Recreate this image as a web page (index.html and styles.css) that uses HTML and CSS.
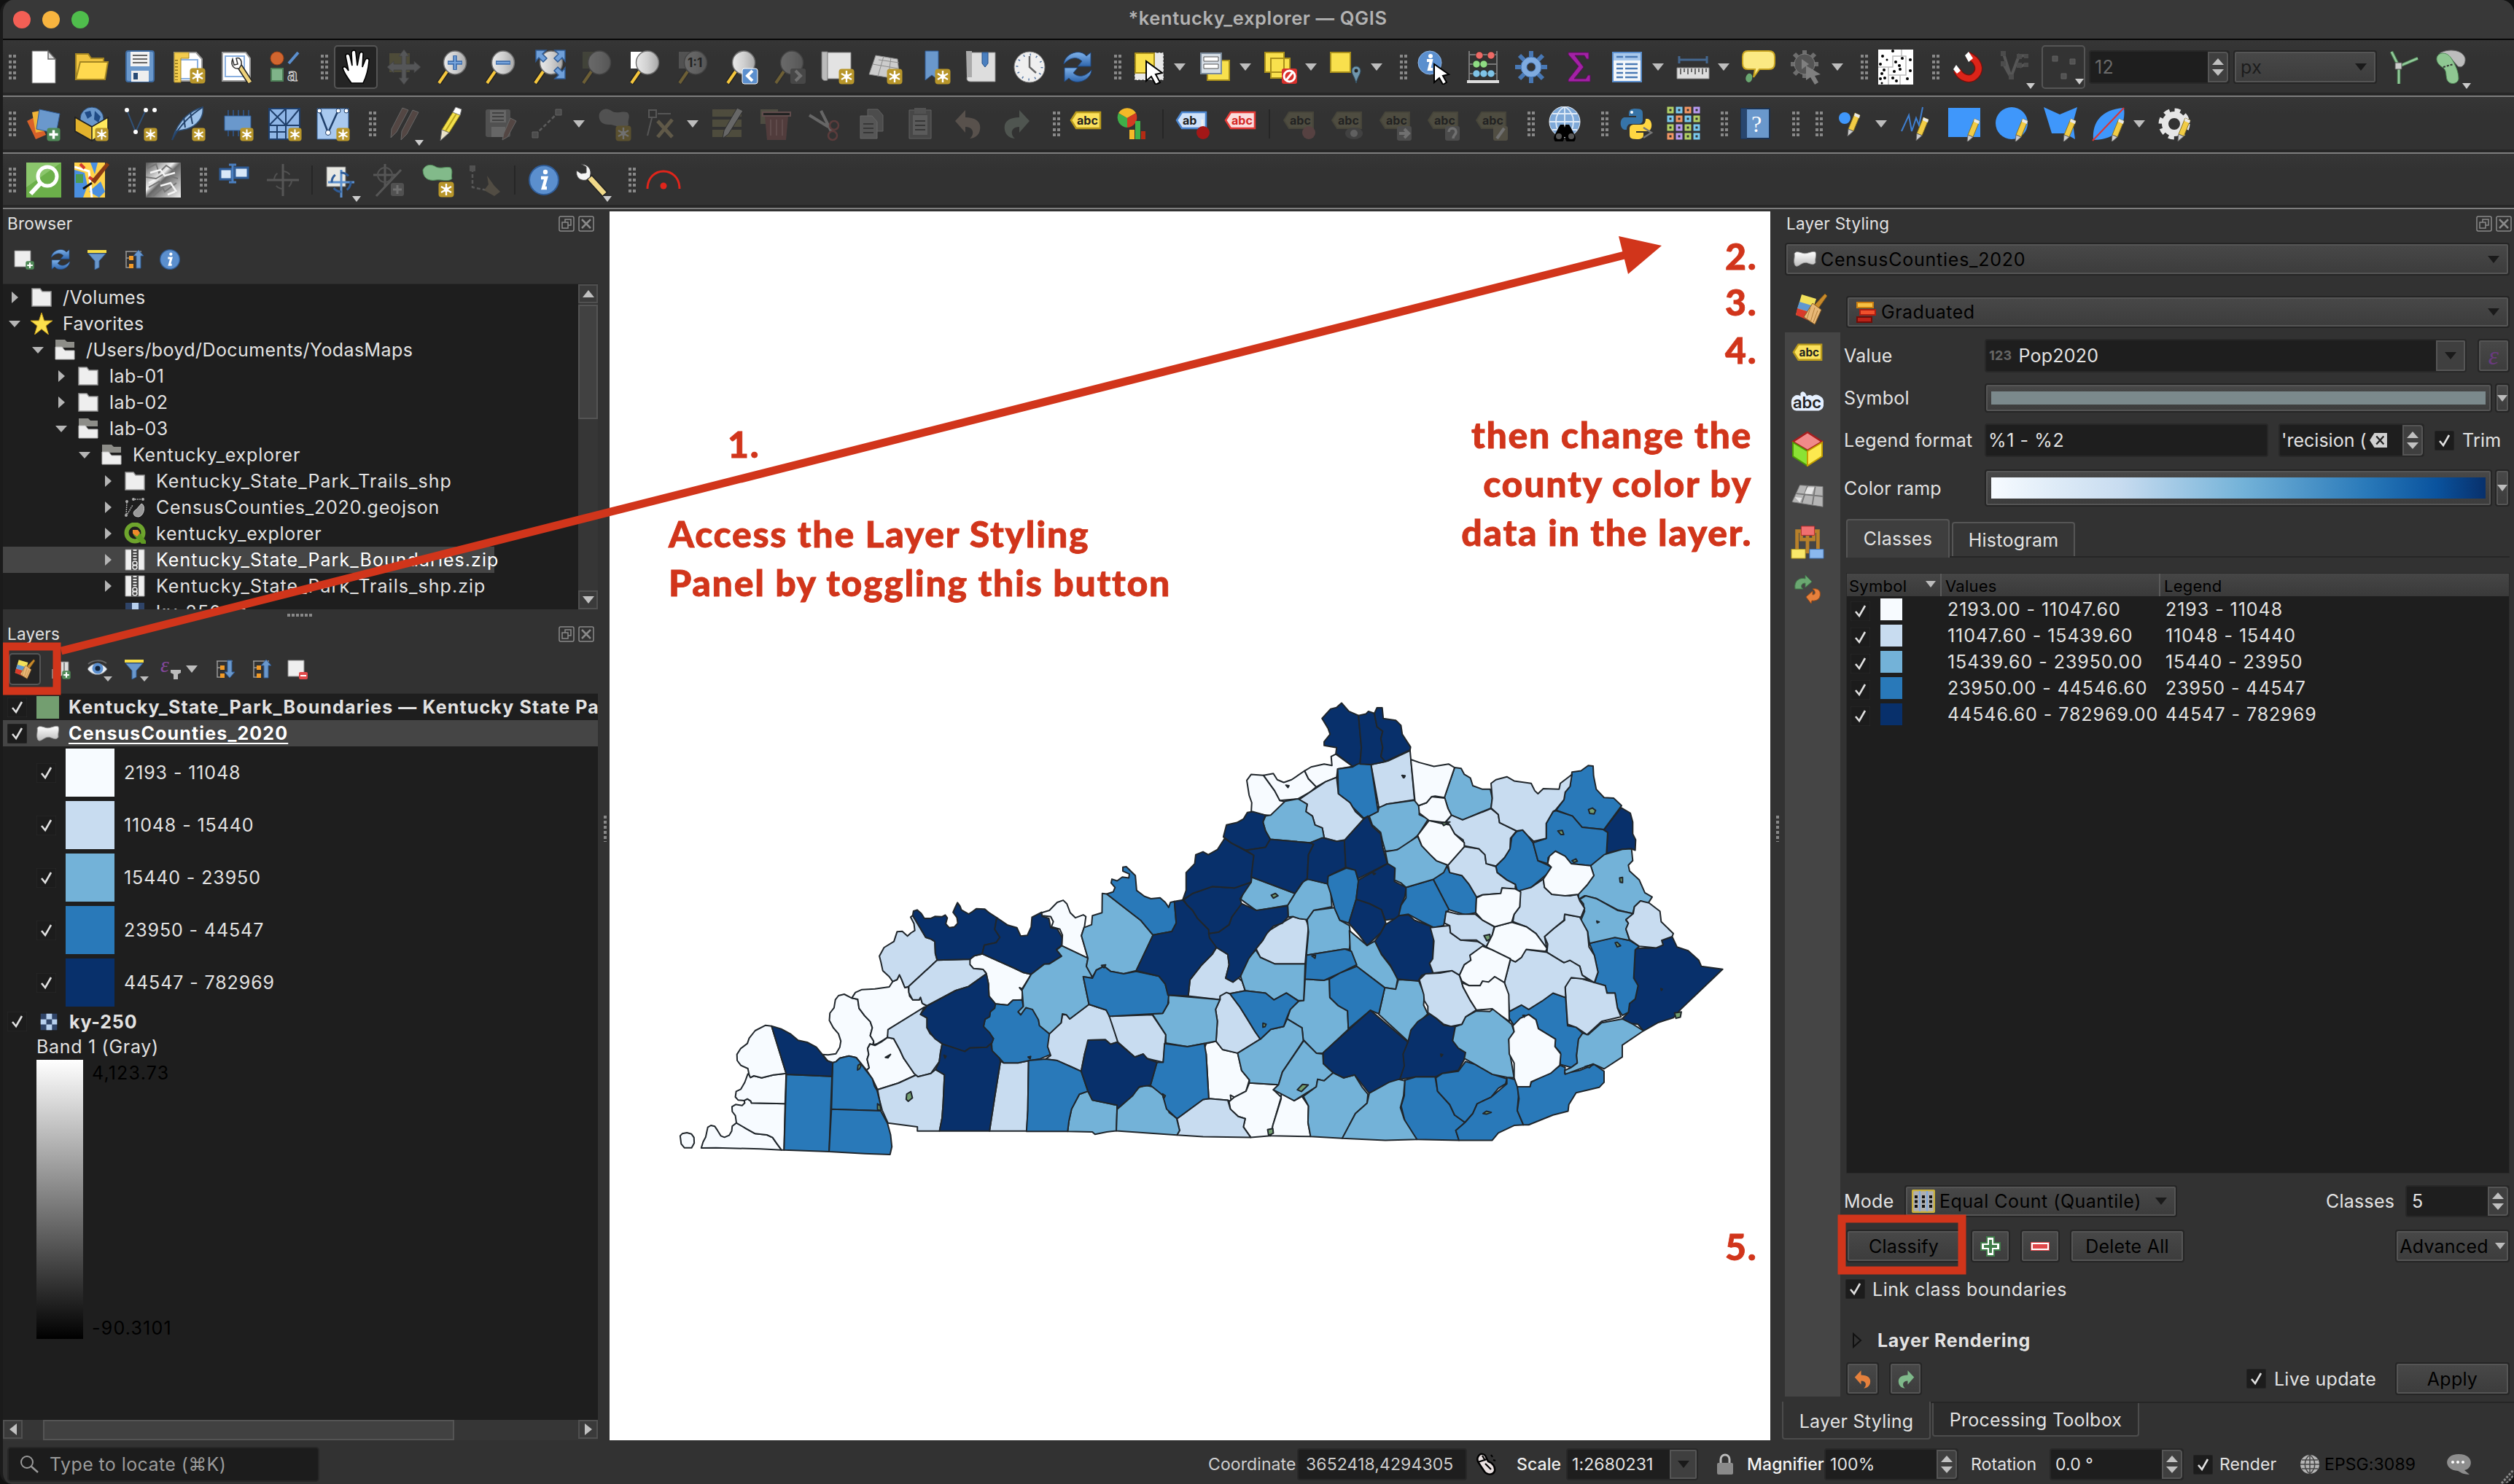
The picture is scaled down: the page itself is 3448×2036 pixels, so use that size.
FILE: index.html
```html
<!DOCTYPE html>
<html lang="en">
<head>
<meta charset="utf-8">
<title>*kentucky_explorer — QGIS</title>
<link rel="stylesheet" href="styles.css">
</head>
<body>
<svg class="defs" width="0" height="0">
<defs>
<linearGradient id="lens" x1="0" x2="1"><stop offset="0" stop-color="#e9e9e9"/><stop offset=".5" stop-color="#d0d0d0"/><stop offset="1" stop-color="#a8a8a8"/></linearGradient>
<linearGradient id="hill" x1="0" y1="0" x2="1" y2="1"><stop offset="0" stop-color="#555"/><stop offset=".4" stop-color="#eee"/><stop offset=".5" stop-color="#666"/><stop offset="1" stop-color="#f4f4f4"/></linearGradient>
<linearGradient id="bluefill" x1="0" y1="0" x2="0" y2="1"><stop offset="0" stop-color="#7fb2ea"/><stop offset="1" stop-color="#2f66ad"/></linearGradient>
<linearGradient id="blob" x1="0" y1="0" x2="0" y2="1"><stop offset="0" stop-color="#ffffff"/><stop offset="1" stop-color="#bdbdbd"/></linearGradient>

<symbol id="gold" viewBox="0 0 22 22"><rect x=".5" y=".5" width="21" height="21" rx="4" fill="#b8962a"/><path d="M11 3v16M4 7l14 8M4 15l14-8" stroke="#fff" stroke-width="2.4"/><circle cx="11" cy="11" r="3.2" fill="#fff"/></symbol>
<symbol id="plusb" viewBox="0 0 22 22"><rect x=".5" y=".5" width="21" height="21" rx="4" fill="#4f8a57"/><path d="M11 4v14M4 11h14" stroke="#fff" stroke-width="4"/></symbol>
<symbol id="pencil" viewBox="0 0 20 34"><path d="M12 2l7 3-9 22-7-3z" fill="#f2cc45" stroke="#8a7420"/><path d="M3 24l7 3-8 7z" fill="#ccc" stroke="#666"/><path d="M12 2l7 3-1 4-7-3z" fill="#e8e8e8"/></symbol>
<symbol id="mag" viewBox="0 0 48 48"><path d="M17 30L6 46" stroke="#222" stroke-width="7"/><path d="M17 30L6 46" stroke="#f5c63c" stroke-width="4"/><ellipse cx="28" cy="18" rx="15.500" ry="16" fill="url(#lens)" stroke="#707070" stroke-width="1.500"/></symbol>
<symbol id="info" viewBox="0 0 48 48"><circle cx="24" cy="24" r="20" fill="#5b8fce" stroke="#2f5c97" stroke-width="2"/><circle cx="26" cy="13" r="3.200" fill="#fff"/><path d="M20 21h7l-4 14h5" fill="none" stroke="#fff" stroke-width="4.500"/></symbol>
<symbol id="refresh" viewBox="0 0 48 48"><path d="M5 20C6 5 28-2 36 9l6-5v19H24l6-7C22 8 12 12 5 20z" fill="url(#bluefill)" stroke="#1f4b86"/><path d="M43 28C42 43 20 50 12 39l-6 5V25h18l-6 7c8 8 18 4 25-4z" fill="url(#bluefill)" stroke="#1f4b86"/></symbol>
<symbol id="tag" viewBox="0 0 48 48"><path d="M4 19L11 8h33v22H11z" fill="currentColor" stroke="#b99a1c" stroke-width="2.500"/></symbol>

<symbol id="new" viewBox="0 0 48 48"><path d="M8 2h22l10 11v33H8z" fill="#fff" stroke="#777"/><path d="M30 2v11h10z" fill="#ddd" stroke="#666" stroke-width="1.500"/></symbol>
<symbol id="open" viewBox="0 0 48 48"><path d="M2 41V6h17l4 6h17v8" fill="#f0c440" stroke="#a38522" stroke-width="2"/><path d="M8 17h38l-4 24H2z" fill="#ffd94f" stroke="#a38522" stroke-width="2"/></symbol>
<symbol id="save" viewBox="0 0 48 48"><rect x="5" y="2" width="38" height="42" rx="3" fill="#6a98cc" stroke="#3e6ca3" stroke-width="2"/><path d="M11 3h26v20H11z" fill="#f2f2f2"/><path d="M14 8h20M14 13h20M14 18h20" stroke="#666" stroke-width="2"/><path d="M12 29h24v15H12z" fill="#eee"/><path d="M15 32h6v9h-6z" fill="#284b76"/></symbol>
<symbol id="layout" viewBox="0 0 48 48"><path d="M5 4h30l8 9v30H5z" fill="#fff" stroke="#999" stroke-width="2"/><path d="M11 14h26v26H11z" fill="none" stroke="#8ab0e0" stroke-width="2"/><path d="M5 4h20v8H14v33H5z" fill="#f3cc4e" stroke="#a38522"/><path d="M8 14v28" stroke="#8c7018" stroke-width="4" stroke-dasharray="1.500 3"/><use href="#gold" x="26" y="25" width="22" height="22"/></symbol>
<symbol id="wrenchdoc" viewBox="0 0 48 48"><path d="M5 4h32l6 8v31H5z" fill="#fff" stroke="#999" stroke-width="2"/><path d="M9 9h26v28H9z" fill="none" stroke="#8ab0e0" stroke-width="2"/><path d="M28 22l15 23" stroke="#222" stroke-width="8"/><path d="M28 22l15 23" stroke="#efd27a" stroke-width="5"/><path d="M19 13c-3 8 1 14 9 13l3-5c1-6-2-11-7-9l2 8-5 1z" fill="#fff" stroke="#333" stroke-width="1.500"/></symbol>
<symbol id="style" viewBox="0 0 48 48"><circle cx="14" cy="12" r="9" fill="#d0652f" stroke="#a34314"/><path d="M30 19L43 4" stroke="#5b8fce" stroke-width="4"/><path d="M6 26h16v17H6z" fill="#7fb489" stroke="#4e8058" stroke-width="2"/><text x="28" y="43" font-size="28" font-weight="700" font-family="Liberation Serif,serif" fill="#555" stroke="#ddd">a</text></symbol>
<symbol id="hand" viewBox="0 0 48 48"><path d="M18 46C12 38 7 31 6 25c2-3 5-1 8 4L10 9c0-4 5-4 6 0l3 13L18 4c1-4 6-4 6 0l2 18 3-16c1-4 6-3 5 1l-1 17 4-10c2-3 6-2 5 2-1 12-3 20-8 30z" fill="#fff" stroke="#000" stroke-width="1.600"/></symbol>
<symbol id="pansel" viewBox="0 0 48 48"><path d="M4 5h28v26H4z" fill="#8d8548"/><path d="M24 0l7 9h-4v11h11v-4l9 8-9 8v-4H27v11h4l-7 9-7-9h4V28H10v4l-9-8 9-8v4h11V9h-4z" fill="#a5aab0" stroke="#666"/></symbol>
<symbol id="zin" viewBox="0 0 48 48"><use href="#mag"/><path d="M28 8v20M18 18h20" stroke="#3f6fae" stroke-width="5.500"/><path d="M28 9v18M19 18h18" stroke="#78a5dc" stroke-width="2"/></symbol>
<symbol id="zout" viewBox="0 0 48 48"><use href="#mag"/><path d="M18 18h20" stroke="#3f6fae" stroke-width="5.500"/><path d="M19 18h18" stroke="#78a5dc" stroke-width="2"/></symbol>
<symbol id="zfull" viewBox="0 0 48 48"><use href="#mag"/><path d="M7 1h14l-5 5 6 6-5 5-6-6-4 5zM47 1H33l5 5-6 6 5 5 6-6 4 5zM47 40H33l5-5-6-6 5-5 6 6 4-5z" fill="#6fa0da" stroke="#2f5c97" stroke-width="1.500"/></symbol>
<symbol id="zsel" viewBox="0 0 48 48"><path d="M5 3h20v23H5z" fill="#666a4a"/><use href="#mag"/></symbol>
<symbol id="zlay" viewBox="0 0 48 48"><path d="M5 3h20v23H5z" fill="#fff"/><use href="#mag"/></symbol>
<symbol id="znat" viewBox="0 0 48 48"><path d="M5 3h20v23H5z" fill="#999"/><use href="#mag"/><text x="17" y="24" font-size="17" font-weight="700" font-family="Inter,sans-serif">1:1</text></symbol>
<symbol id="zlast" viewBox="0 0 48 48"><use href="#mag"/><rect x="26" y="26" width="21" height="21" rx="3" fill="#5b8fce" stroke="#fff"/><path d="M40 29l-7 7 7 7" fill="none" stroke="#fff" stroke-width="4"/></symbol>
<symbol id="znext" viewBox="0 0 48 48"><use href="#mag"/><rect x="26" y="26" width="21" height="21" rx="3" fill="#777"/><path d="M33 29l7 7-7 7" fill="none" stroke="#fff" stroke-width="4"/></symbol>
<symbol id="newmap" viewBox="0 0 48 48"><path d="M5 4h38v36H5z" fill="#e3e3e3" stroke="#888"/><path d="M3 3h8v39c-5 2-8-1-8-4z" fill="#bbb" stroke="#777"/><use href="#gold" x="26" y="26" width="22" height="22"/></symbol>
<symbol id="new3d" viewBox="0 0 48 48"><path d="M11 8l30 5 3 28-42-7z" fill="#ccc" stroke="#888"/><path d="M22 9l-8 28M32 11l-4 28M7 20l35 6M15 14l28 4" stroke="#8b8b8b" fill="none"/><use href="#gold" x="26" y="26" width="22" height="22"/></symbol>
<symbol id="newbook" viewBox="0 0 48 48"><path d="M13 2h18v40l-9-7-9 7z" fill="#6a98cc" stroke="#2f5c97"/><use href="#gold" x="26" y="26" width="22" height="22"/></symbol>
<symbol id="bookm" viewBox="0 0 48 48"><path d="M5 4h38v40H9c-5 0-6-4-4-8z" fill="#ddd" stroke="#888"/><path d="M3 2h8v36H4z" fill="#aaa"/><path d="M25 4h8v15l-4 5-4-5z" fill="#4a7fbf" stroke="#24518a"/></symbol>
<symbol id="clock" viewBox="0 0 48 48"><circle cx="24" cy="24" r="21" fill="#efefef" stroke="#888"/><circle cx="24" cy="24" r="17" fill="none" stroke="#5577a5" stroke-width="3" stroke-dasharray="1.500 7.400"/><path d="M24 9v15l9 8" fill="none" stroke="#666" stroke-width="2.500"/></symbol>
<symbol id="sel1" viewBox="0 0 48 48"><path d="M4 4h40v38H4z" fill="#e8e8e8" stroke="#222" stroke-dasharray="3 2"/><path d="M5 5h26v27H5z" fill="#f9e04d" stroke="#a98f1b" stroke-width="2"/><path d="M20 16v27l7-6 6 11 6-3-6-11 9-2z" fill="#fff" stroke="#000" stroke-width="2"/></symbol>
<symbol id="sel2" viewBox="0 0 48 48"><path d="M14 15h30v27H14z" fill="#f9e04d" stroke="#a98f1b" stroke-width="2"/><path d="M5 5h28v28H5z" fill="#d5dde5" stroke="#7b8b9c" stroke-width="2"/><path d="M9 10h20v6H9zM9 20h20v6H9z" fill="#fff" stroke="#555"/></symbol>
<symbol id="sel3" viewBox="0 0 48 48"><path d="M3 4h26v27H3zM11 12h26v27H11z" fill="#f9e04d" stroke="#a98f1b" stroke-width="2"/><rect x="26" y="26" width="21" height="21" rx="3" fill="#d9302c"/><circle cx="36.500" cy="36.500" r="7.500" fill="none" stroke="#fff" stroke-width="3"/><path d="M32 42l9-11" stroke="#fff" stroke-width="3"/></symbol>
<symbol id="sel4" viewBox="0 0 48 48"><path d="M3 4h27v27H3z" fill="#f9e04d" stroke="#a98f1b" stroke-width="2"/><path d="M38 46c-2-9-6-12-6-17a6 6 0 0112 0c0 5-4 8-6 17z" fill="#6f95ab" stroke="#35566b"/><circle cx="38" cy="29" r="2.500" fill="#222"/></symbol>
<symbol id="ident" viewBox="0 0 48 48"><circle cx="17" cy="18" r="16" fill="#5b8fce" stroke="#8fb6e6"/><circle cx="18" cy="9" r="3" fill="#fff"/><path d="M13 15h6l-3 12h5" fill="none" stroke="#fff" stroke-width="4"/><path d="M23 20v25l7-6 5 9 5-3-5-9 8-2z" fill="#fff" stroke="#000" stroke-width="2"/></symbol>
<symbol id="abacus" viewBox="0 0 48 48"><path d="M5 2v42M43 2v42M5 7h38M5 20h38M5 33h38" stroke="#777" stroke-width="2" fill="none"/><path d="M2 42h44v4H2z" fill="#ddd"/><g stroke="#0006"><circle cx="19" cy="8" r="5" fill="#ee6a66"/><circle cx="35" cy="8" r="5" fill="#ee6a66"/><circle cx="15" cy="20" r="5" fill="#8fdc84"/><circle cx="25" cy="20" r="5" fill="#8fdc84"/><circle cx="15" cy="33" r="5" fill="#7fc3e6"/><circle cx="25" cy="33" r="5" fill="#7fc3e6"/><circle cx="35" cy="33" r="5" fill="#7fc3e6"/></g></symbol>
<symbol id="gear" viewBox="0 0 48 48"><path d="M24 2v44M2 24h44M8 8l32 32M40 8L8 40" stroke="#4878b5" stroke-width="6"/><circle cx="24" cy="24" r="14" fill="#7fabe0" stroke="#3f6fae"/><circle cx="24" cy="24" r="6" fill="#333" stroke="#3f6fae"/></symbol>
<symbol id="sigma" viewBox="0 0 48 48"><path d="M9 4h28v9h-3l-3-5H18l12 16-13 16h16l3-5h3v9H9v-3l14-18L9 7z" fill="#a321a5" stroke="#5c0f5e"/></symbol>
<symbol id="table" viewBox="0 0 48 48"><path d="M4 4h39v40H4z" fill="#f4f7fa" stroke="#5b8fce" stroke-width="2"/><path d="M5 5h37v10H5z" fill="#a8c8ec"/><path d="M9 10h9M21 10h17M9 20h9M21 20h17M9 26h9M21 26h17M9 32h9M21 32h17M9 38h9M21 38h17" stroke="#4a7ab5" stroke-width="2.500"/></symbol>
<symbol id="measure" viewBox="0 0 48 48"><path d="M5 14h38M5 9v10M43 9v10" stroke="#44678f" stroke-width="3"/><path d="M2 25h44v15H2z" fill="#ddd" stroke="#888"/><path d="M7 26v8M12 26v5M17 26v8M22 26v5M27 26v8M32 26v5M37 26v8M42 26v5" stroke="#444" stroke-width="1.500"/></symbol>
<symbol id="tip" viewBox="0 0 48 48"><path d="M10 33c8-2 6 13 0 12-6-2-4-10 0-12z" fill="#6aa771"/><path d="M9 2h29q8 0 8 8v9q0 8-8 8H25L17 38l2-11H9q-7 0-7-8v-9q0-8 7-8z" fill="#fbe983" stroke="#c9a520" stroke-width="2"/></symbol>
<symbol id="action" viewBox="0 0 48 48"><path d="M21 1v38M2 20h38M7 6l28 28M35 6L7 34" stroke="#aaa" stroke-width="6"/><circle cx="21" cy="20" r="14" fill="#777" stroke="#ccc"/><path d="M17 13l10 7-10 7z" fill="#ccc"/><path d="M23 22v20l6-4 6 10 5-3-5-9 8-2z" fill="#ccc"/></symbol>
<symbol id="dots" viewBox="0 0 48 48"><path d="M0 0h48v48H0z" fill="#fff"/><path d="M0 24h20V9h18v26H14v13M32 0v9M14 24v11M30 35v13" fill="none" stroke="#bbb" stroke-width="1.500"/><g fill="#000"><circle cx="6" cy="9" r="2"/><circle cx="20" cy="2" r="2"/><circle cx="12" cy="14" r="1.500"/><circle cx="3" cy="20" r="2"/><circle cx="24" cy="17" r="2"/><circle cx="33" cy="12" r="2"/><circle cx="44" cy="14" r="2"/><circle cx="29" cy="22" r="2"/><circle cx="8" cy="28" r="2"/><circle cx="5" cy="33" r="2"/><circle cx="22" cy="30" r="2"/><circle cx="30" cy="27" r="2"/><circle cx="44" cy="29" r="2"/><circle cx="3" cy="40" r="2"/><circle cx="9" cy="39" r="2"/><circle cx="20" cy="39" r="2"/><circle cx="25" cy="43" r="2"/><circle cx="40" cy="40" r="2"/><circle cx="5" cy="46" r="1.500"/></g></symbol>
<symbol id="magnet" viewBox="0 0 48 48"><path d="M25 8C40 15 43 27 36 35 28 44 15 39 10 28" fill="none" stroke="#7a0e0a" stroke-width="11"/><path d="M25 8C40 15 43 27 36 35 28 44 15 39 10 28" fill="none" stroke="#dc2419" stroke-width="8.500"/><path d="M26 3l6 9-6 5-5-9zM9 21l6 8-5 4-5-6z" fill="#fff"/></symbol>
<symbol id="vtx" viewBox="0 0 48 48"><path d="M8 6l10 32M30 6L18 38M8 20l10 18M36 8l-8 2M38 20l-8 4" stroke="#aaa" stroke-width="4" fill="none"/><path d="M4 2h7v7H4zM26 6h7v7h-7zM36 6h6v6h-6zM4 16h7v7H4zM26 18h7v7h-7zM36 18h6v6h-6zM15 34h7v7h-7z" fill="#888"/></symbol>
<symbol id="vdots" viewBox="0 0 48 48"><path d="M9 9h7v7H9zM33 13h7v7h-7zM21 33h7v7h-7z" fill="#999" stroke="#ccc"/></symbol>
<symbol id="topo" viewBox="0 0 48 48"><path d="M8 3l10 20L44 12M18 23v24" stroke="#4f8a57" stroke-width="4.500" fill="none"/><path d="M8 3l10 20L44 12M18 23v24" stroke="#93c99b" stroke-width="2.500" fill="none"/><path d="M13 18h9v9h-9z" fill="#ccc" stroke="#555"/></symbol>
<symbol id="foot" viewBox="0 0 48 48"><path d="M8 5C20-2 40 0 43 12c1 9-5 14-10 11L22 10z" fill="#bdbdbd" stroke="#666"/><path d="M4 14C3 4 17 1 24 12c5 8 10 18 10 28-1 8-13 9-16 1-2-8 0-11-5-16-5-3-8-6-9-11z" fill="#8fc792" stroke="#4f8a57"/><path d="M13 24l14-4" stroke="#333" stroke-dasharray="3 2" stroke-width="2"/></symbol>

<symbol id="dsm" viewBox="0 0 48 48"><path d="M1 20l14-7 12 26-14 6z" fill="#d8622a"/><path d="M8 8l16-3 4 28-15 3z" fill="#f0b437"/><path d="M18 4l28 6-5 27-27-6z" fill="#6a98cc" stroke="#2f5c97"/><use href="#plusb" x="28" y="29" width="19" height="19"/></symbol>
<symbol id="geopkg" viewBox="0 0 48 48"><circle cx="24" cy="17" r="16" fill="#6a98cc" stroke="#284b76"/><path d="M14 8l8-2 2 7-6 4zM28 6l8 8-3 8-6-4z" fill="#1f4b86"/><path d="M1 15l23 13 22-13v17L24 47 1 34z" fill="#ffe95c" stroke="#222" stroke-width="1.500"/><path d="M1 15l23 13v19L1 34z" fill="#e2b22c" stroke="#222" stroke-width="1.500"/><use href="#gold" x="28" y="29" width="19" height="19"/></symbol>
<symbol id="shp" viewBox="0 0 48 48"><path d="M6 5l12 30L32 5" fill="none" stroke="#2f5077" stroke-width="2"/><circle cx="6" cy="5" r="3" fill="#fff"/><circle cx="32" cy="5" r="3" fill="#fff"/><circle cx="44" cy="5" r="3" fill="#fff"/><circle cx="18" cy="35" r="3" fill="#fff"/><use href="#gold" x="29" y="29" width="19" height="19"/></symbol>
<symbol id="feather" viewBox="0 0 48 48"><path d="M2 46C8 26 20 8 44 1c2 14-8 26-22 30L8 34z" fill="#9fc3ea" stroke="#2f5077" stroke-width="1.500"/><path d="M2 46C10 30 24 14 44 1M18 15l2 14M27 8l3 16" fill="none" stroke="#24436b" stroke-width="2"/><use href="#gold" x="29" y="29" width="19" height="19"/></symbol>
<symbol id="chip" viewBox="0 0 48 48"><path d="M13 5v36M20 5v36M27 5v36M34 5v36M41 5v28" stroke="#2f4f7a" stroke-width="2"/><path d="M8 13h36v20H8z" fill="#6a98cc" stroke="#2f5c97"/><use href="#gold" x="29" y="29" width="19" height="19"/></symbol>
<symbol id="mesh" viewBox="0 0 48 48"><path d="M3 3h42v42H3z" fill="#8fb6e6" stroke="#1f3f6b" stroke-width="2"/><path d="M3 26h42M26 3v42M3 3l23 23L45 3M3 26L26 3M14 26v19M3 35h23" stroke="#1f3f6b" stroke-width="2" fill="none"/><use href="#gold" x="29" y="29" width="19" height="19"/></symbol>
<symbol id="virt" viewBox="0 0 48 48"><path d="M3 3h43v42H3z" fill="#a9c9ef" stroke="#2f5c97"/><path d="M6 5l12 31L32 5" fill="none" stroke="#1f3f6b" stroke-width="2.500"/><g fill="#fff" stroke="#1f3f6b"><circle cx="6" cy="6" r="3"/><circle cx="32" cy="6" r="3"/><circle cx="43" cy="6" r="3"/><circle cx="18" cy="36" r="3.500"/></g><use href="#gold" x="29" y="29" width="19" height="19"/></symbol>
<symbol id="pens" viewBox="0 0 48 48"><path d="M22 2l8 3-16 30-8 8 1-12zM36 5l8 3-16 30-8 8 1-12z" fill="#a0766a" stroke="#ddd"/></symbol>
<symbol id="pen" viewBox="0 0 48 48"><path d="M25 8l10 4-15 24-10-4z" fill="#f3e04c" stroke="#8a7b16"/><path d="M25 8l4-7 8 3-2 8z" fill="#fff" stroke="#888"/><path d="M10 32l10 4-12 11z" fill="#e9e2c9" stroke="#777"/><path d="M30 10L15 34" stroke="#b7a31f" stroke-width="2"/></symbol>
<symbol id="savee" viewBox="0 0 48 48"><rect x="4" y="4" width="34" height="38" rx="3" fill="#999"/><path d="M10 5h22v17H10zM12 28h19v14H12z" fill="#ddd"/><path d="M13 9h16M13 14h16M13 19h16" stroke="#666" stroke-width="2"/><path d="M38 16l8 4-12 22-7 4 2-9z" fill="#a0766a" stroke="#ddd"/></symbol>
<symbol id="digi" viewBox="0 0 48 48"><path d="M6 39L38 8" stroke="#bbb" stroke-width="2.500" stroke-dasharray="5 3"/><path d="M2 35h8v8H2zM34 4h8v8h-8z" fill="#888" stroke="#ccc"/></symbol>
<symbol id="poly" viewBox="0 0 48 48"><path d="M4 10C8 2 16 2 22 7c6 3 14-1 20 1 6 5 0 10 2 17-4 7-16 2-24 0-12 1-18-5-16-15z" fill="#9a9a9a"/><use href="#gold" x="26" y="26" width="22" height="22"/></symbol>
<symbol id="tools" viewBox="0 0 48 48"><path d="M6 5h10v10H6zM18 10h18M10 16L4 40" stroke="#aaa" stroke-width="2" fill="none"/><path d="M18 42l20-24M38 42L18 20" stroke="#c9b57c" stroke-width="5"/></symbol>
<symbol id="mod" viewBox="0 0 48 48"><path d="M3 4h40v10H3zM3 18h40v10H3zM3 32h40v10H3z" fill="#8f8858"/><path d="M37 2l8 4-20 32-8 6 2-11z" fill="#e0e0e0" stroke="#222"/></symbol>
<symbol id="trash" viewBox="0 0 48 48"><path d="M3 4h24v20H3z" fill="#8f8a66"/><path d="M9 13h32l-3 33H12z" fill="#985454"/><path d="M6 8h38v5H6zM17 18v22M25 18v22M33 18v22" stroke="#c88" stroke-width="2"/></symbol>
<symbol id="cut" viewBox="0 0 48 48"><path d="M4 12l26 16M20 6l14 28" stroke="#ddd" stroke-width="4"/><circle cx="38" cy="26" r="6" fill="none" stroke="#b55" stroke-width="2.500"/><circle cx="36" cy="40" r="6" fill="none" stroke="#b55" stroke-width="2.500"/></symbol>
<symbol id="copy" viewBox="0 0 48 48"><path d="M18 4h14l7 8v22H18z" fill="#888" stroke="#ccc"/><path d="M8 13h16l7 8v23H8z" fill="#aaa" stroke="#ddd"/><path d="M12 24h14M12 30h14M12 36h14" stroke="#444" stroke-width="2"/></symbol>
<symbol id="paste" viewBox="0 0 48 48"><path d="M9 5h30v39H9z" fill="#777" stroke="#ccc"/><path d="M14 12h20v27H14z" fill="#bbb"/><path d="M16 2h16v8H16z" fill="#999"/><path d="M17 20h14M17 26h14M17 32h14" stroke="#444" stroke-width="2"/></symbol>
<symbol id="undo" viewBox="0 0 48 48"><path d="M6 20L20 5v10c14 0 22 6 20 17-1 8-8 12-14 12 6-4 7-16-6-16v8z" fill="currentColor"/></symbol>
<symbol id="redo" viewBox="0 0 48 48"><path d="M42 20L28 5v10C14 15 6 21 8 32c1 8 8 12 14 12-6-4-7-16 6-16v8z" fill="currentColor"/></symbol>
<symbol id="abc" viewBox="0 0 48 48"><use href="#tag"/><text x="12" y="25" font-size="16" font-weight="700" font-family="Inter,sans-serif" fill="#222">abc</text></symbol>
<symbol id="diag" viewBox="0 0 48 48"><path d="M15 16V29A14 14 0 013 9z" fill="#3fae49"/><path d="M3 9a14 14 0 0124 0L15 16z" fill="#f4b928"/><path d="M15 16l12-7a14 14 0 01-12 20z" fill="#d23a22"/><path d="M18 32h7v13h-7z" fill="#f4b928"/><path d="M26 20h7v25h-7z" fill="#3fae49"/><path d="M34 34h6v11h-6z" fill="#b32b14"/></symbol>
<symbol id="pinlab" viewBox="0 0 48 48"><path d="M3 19L10 8h33v22H10z" fill="#cfe2fa" stroke="#4a85cf" stroke-width="2.500"/><text x="11" y="25" font-size="16" font-weight="700" font-family="Inter,sans-serif" fill="#222">ab</text><path d="M38 18v12" stroke="#eee" stroke-width="3"/><ellipse cx="39" cy="36" rx="9" ry="9" fill="#a31717"/></symbol>
<symbol id="redlab" viewBox="0 0 48 48"><path d="M4 19L11 8h33v22H11z" fill="#fbdcdc" stroke="#e53935" stroke-width="2.500"/><text x="12" y="25" font-size="16" font-weight="700" font-family="Inter,sans-serif" fill="#d42a26">abc</text></symbol>
<symbol id="lb" viewBox="0 0 48 48"><path d="M4 19L11 8h33v22H11z" fill="#8f8a62" stroke="#77734f" stroke-width="2"/><text x="12" y="25" font-size="16" font-weight="700" font-family="Inter,sans-serif" fill="#000">abc</text></symbol>
<symbol id="lb1" viewBox="0 0 48 48"><use href="#lb"/><circle cx="38" cy="36" r="9" fill="#a66"/></symbol>
<symbol id="lb2" viewBox="0 0 48 48"><use href="#lb"/><ellipse cx="34" cy="37" rx="12" ry="8" fill="#666"/><circle cx="34" cy="37" r="5" fill="#ccc"/></symbol>
<symbol id="lb3" viewBox="0 0 48 48"><use href="#lb"/><rect x="27" y="27" width="20" height="20" rx="3" fill="#888"/><path d="M30 37h12M37 31l6 6-6 6" stroke="#fff" stroke-width="4" fill="none"/></symbol>
<symbol id="lb4" viewBox="0 0 48 48"><use href="#lb"/><rect x="27" y="27" width="20" height="20" rx="3" fill="#888"/><path d="M32 35a5 5 0 1110 0c0 4-4 4-4 9" stroke="#fff" stroke-width="3.500" fill="none"/></symbol>
<symbol id="lb5" viewBox="0 0 48 48"><use href="#lb"/><rect x="27" y="27" width="20" height="20" rx="3" fill="#9a916c"/><path d="M32 44l10-14" stroke="#fff" stroke-width="4"/></symbol>
<symbol id="globe" viewBox="0 0 48 48"><circle cx="24" cy="21" r="21" fill="#7fa9d8" stroke="#e8f0fa"/><path d="M24 0v42M3 21h42M7 10h34M7 32h34M24 0C8 10 8 32 24 42 40 32 40 10 24 0" fill="none" stroke="#dfeaf7" stroke-width="1.800"/><path d="M15 30l3-5h5l1 4 1-4h5l3 5 5 10a7 7 0 11-13 2h-2a7 7 0 11-13-2z" fill="#000"/><circle cx="16" cy="41" r="4" fill="#555"/><circle cx="33" cy="41" r="4" fill="#555"/></symbol>
<symbol id="python" viewBox="0 0 48 48"><path d="M23 3c10 0 10 3 10 8v7c0 4-2 6-6 6H17c-4 0-6 3-6 8H8c-7-2-7-16 0-17h16v-2H14V9c0-4 3-6 9-6z" fill="#3674a8"/><path d="M25 45c-10 0-10-3-10-8v-6c0-4 2-6 6-6h10c4 0 6-3 6-8h3c7 2 7 16 0 17H24v2h10v3c0 4-3 6-9 6z" fill="#ffd642"/><circle cx="18" cy="8" r="2" fill="#fff"/><path d="M34 29l11 7-11 7" fill="none" stroke="#777" stroke-width="2.500"/></symbol>
<symbol id="grid" viewBox="0 0 48 48"><g fill="none" stroke-width="3"><path d="M2 2h6v6H2zM26 26h6v6h-6zM2 26h6v6H2zM38 14h6v6h-6zM26 38h6v6h-6z" stroke="#b2d066"/><path d="M14 2h6v6h-6zM2 14h6v6H2zM26 14h6v6h-6zM38 26h6v6h-6zM38 38h6v6h-6z" stroke="#79c8ee"/><path d="M26 2h6v6h-6zM14 14h6v6h-6zM2 38h6v6H2z" stroke="#f29664"/><path d="M38 2h6v6h-6zM14 26h6v6h-6zM14 38h6v6h-6z" stroke="#b79af0"/></g></symbol>
<symbol id="help" viewBox="0 0 48 48"><path d="M4 3h39v41H4z" fill="#6a98cc" stroke="#1c3352" stroke-width="2"/><path d="M4 3h8v41H4z" fill="#28466e"/><text x="18" y="35" font-size="32" font-family="Liberation Serif,serif" fill="#fff">?</text></symbol>
<symbol id="s1" viewBox="0 0 48 48"><circle cx="16" cy="16" r="8" fill="#3f97fb"/><use href="#pencil" x="18" y="7" width="20" height="34"/></symbol>
<symbol id="s2" viewBox="0 0 48 48"><path d="M4 34L14 12l4 22 6-18 4 10 5-25" fill="none" stroke="#3f7fd0" stroke-width="2"/><use href="#pencil" x="22" y="13" width="20" height="34"/></symbol>
<symbol id="s3" viewBox="0 0 48 48"><path d="M2 2h44v40H2z" fill="#3f97fb"/><use href="#pencil" x="26" y="15" width="20" height="34"/></symbol>
<symbol id="s4" viewBox="0 0 48 48"><circle cx="23" cy="23" r="22" fill="#3f97fb"/><use href="#pencil" x="26" y="15" width="20" height="34"/></symbol>
<symbol id="s5" viewBox="0 0 48 48"><path d="M1 1l22 10L47 1l-6 22 3 22-14-8H12z" fill="#3f97fb"/><use href="#pencil" x="26" y="15" width="20" height="34"/></symbol>
<symbol id="s6" viewBox="0 0 48 48"><path d="M3 46C1 22 14 4 45 2c3 22-8 44-42 44z" fill="#3f97fb"/><path d="M2 47L45 2" stroke="#d33" stroke-width="2"/><use href="#pencil" x="26" y="15" width="20" height="34"/></symbol>
<symbol id="s7" viewBox="0 0 48 48"><circle cx="24" cy="24" r="18" fill="none" stroke="#e6e6e6" stroke-width="7" stroke-dasharray="7.500 6.640"/><circle cx="24" cy="24" r="12.500" fill="none" stroke="#e6e6e6" stroke-width="9"/><use href="#pencil" x="27" y="14" width="20" height="34"/></symbol>

<symbol id="gsearch" viewBox="0 0 48 48"><path d="M0 0h48v48H0z" fill="#6cb04a"/><path d="M0 0h48L0 34z" fill="#8bc66c"/><circle cx="29" cy="19" r="13" fill="none" stroke="#fff" stroke-width="5"/><path d="M19 29L6 43" stroke="#fff" stroke-width="6"/></symbol>
<symbol id="osm" viewBox="0 0 48 48"><path d="M0 0h42v48H0z" fill="#ffd24a"/><path d="M0 10l14 4 4 18-6 16H0zM22 0h10l-4 16zM20 40l16-14 6 14-8 8z" fill="#4a8fe0"/><path d="M0 6l20 6 4 36" stroke="#fff" stroke-width="3" fill="none"/><path d="M2 16h10v12H2z" fill="#4d9a52"/><path d="M8 2l6 6M20 20l6 4" stroke="#d2382c" stroke-width="4"/><path d="M12 36l12-8" stroke="#111" stroke-width="3"/><path d="M44 0l4 3-20 26-5-4z" fill="#8a3a14"/></symbol>
<symbol id="hillsh" viewBox="0 0 48 48"><path d="M0 0h48v48H0z" fill="url(#hill)"/><path d="M2 8l12-6 4 12 10-10 12 8M0 20l14 2 10-6 20 6M4 34l14-8 8 14 16-12M10 46l12-10" fill="none" stroke="#777" stroke-width="2"/><path d="M6 14l14-4 6 8 14-4M20 32l14-4 8 12M4 28l8-4M30 44l10-4" fill="none" stroke="#f4f4f4" stroke-width="2.500"/></symbol>
<symbol id="georef" viewBox="0 0 48 48"><path d="M4 9h16v14H4zM24 7h18v14H24z" fill="#d9e8f8" stroke="#2f5c97" stroke-width="3"/><path d="M21 2v24M16 3h10M16 27h10" stroke="#4a7fc0" stroke-width="3"/></symbol>
<symbol id="cross" viewBox="0 0 48 48"><path d="M24 2v44M2 24h44" stroke="#aaa" stroke-width="3"/><circle cx="24" cy="24" r="12" fill="none" stroke="#999" stroke-width="2" stroke-dasharray="10 9"/></symbol>
<symbol id="adv" viewBox="0 0 48 48"><path d="M4 6h26v27H4z" fill="#e9e9e3" stroke="#777"/><path d="M24 10v38M6 27h36" stroke="#5b8fce" stroke-width="3"/><circle cx="24" cy="27" r="13" fill="none" stroke="#2f5c97" stroke-width="3" stroke-dasharray="12 8"/></symbol>
<symbol id="crossp" viewBox="0 0 48 48"><path d="M18 2v32M2 17h32M6 46L40 10" stroke="#aaa" stroke-width="3"/><circle cx="18" cy="17" r="10" fill="none" stroke="#999" stroke-width="2"/><rect x="26" y="28" width="18" height="18" rx="3" fill="#999"/><path d="M35 31v12M29 37h12" stroke="#fff" stroke-width="3"/></symbol>
<symbol id="polyg" viewBox="0 0 48 48"><path d="M4 10C8 2 16 2 22 6c6 3 14-1 20 1 4 6 0 10 2 15-4 5-16 1-22 2-12 2-18-4-18-14z" fill="#82ba8a" stroke="#4f8a57"/><use href="#gold" x="25" y="26" width="22" height="22"/></symbol>
<symbol id="sweep" viewBox="0 0 48 48"><path d="M6 8v26l20 4" fill="none" stroke="#aaa" stroke-width="2.500" stroke-dasharray="5 3"/><path d="M2 4h8v8H2z" fill="#999"/><path d="M26 18l10 14 8 8-8 6-14-8 6-8z" fill="#9a8a6a"/></symbol>
<symbol id="wrench" viewBox="0 0 48 48"><path d="M20 20l22 24" stroke="#222" stroke-width="10"/><path d="M21 21l20 22" stroke="#f0d989" stroke-width="7"/><path d="M9 2l7 4v8l-7 1-6-4C1 19 7 26 16 24l5-4c3-8 0-17-12-18z" fill="#f5f5f5" stroke="#444"/></symbol>
<symbol id="arc" viewBox="0 0 48 48"><path d="M2 36C2 4 46 4 46 36" fill="none" stroke="#e0251b" stroke-width="3"/><circle cx="24" cy="32" r="4.500" fill="#e0251b"/></symbol>

<symbol id="addl" viewBox="0 0 28 28"><path d="M1 2h22v22H1z" fill="#eee" stroke="#888"/><use href="#plusb" x="16" y="16" width="12" height="12"/></symbol>
<symbol id="reml" viewBox="0 0 28 28"><path d="M1 2h22v22H1z" fill="#eee" stroke="#888"/><rect x="16" y="18" width="12" height="10" rx="2" fill="#e0484a"/><path d="M18 23h8" stroke="#fff" stroke-width="2"/></symbol>
<symbol id="filter" viewBox="0 0 28 28"><path d="M1 1h26v4H1z" fill="#f6dd47"/><path d="M2 6h24L17 16v9l-6 3V16z" fill="#6a98cc" stroke="#2f5c97"/></symbol>
<symbol id="coll" viewBox="0 0 28 28"><path d="M3 3h22M4 3v22h7M4 12h7" stroke="#999" stroke-width="1.500" fill="none"/><path d="M8 9h6v6H8zM8 20h6v6H8z" fill="#f19a27"/><path d="M21 1l7 8h-4v17h-6V9h-4z" fill="#6a98cc" stroke="#2f5c97"/></symbol>
<symbol id="expd" viewBox="0 0 28 28"><path d="M3 3h22M4 3v22h7M4 12h7" stroke="#999" stroke-width="1.500" fill="none"/><path d="M8 9h6v6H8zM8 20h6v6H8z" fill="#f19a27"/><path d="M21 26l7-8h-4V2h-6v16h-4z" fill="#6a98cc" stroke="#2f5c97"/></symbol>
<symbol id="brush" viewBox="0 0 44 44"><path d="M9 2l20 6-9 28L1 30z" fill="#f1e05a"/><path d="M6 12l20 6-3 9-20-6z" fill="#5f97cf"/><path d="M3 21l20 6-4 11L1 30z" fill="#d93a2b"/><path d="M41 1l3 3-12 17-5-5z" fill="#c98a2a" stroke="#7a5216"/><path d="M24 14l12 9-9 20-15-10z" fill="#e8b877" stroke="#8a5c20"/><path d="M21 20l-5 16M27 20l-6 20M31 24l-6 16" stroke="#b5803a"/></symbol>
<symbol id="group" viewBox="0 0 28 28"><path d="M8 4h16v19H8z" fill="#ddd" stroke="#777"/><path d="M13 5v17M18 5v17M2 14v12h8" stroke="#888" fill="none" stroke-width="2"/><use href="#plusb" x="15" y="16" width="12" height="12"/></symbol>
<symbol id="eye" viewBox="0 0 28 28"><path d="M0 14C6 4 20 4 27 14 20 24 7 24 0 14z" fill="#e8eef5" stroke="#777"/><circle cx="14" cy="13" r="7.500" fill="#5b8fce"/><circle cx="14" cy="13" r="3.500" fill="#12243c"/><path d="M1 7C8 1 19 1 26 6" fill="none" stroke="#666" stroke-width="2"/></symbol>
<symbol id="eps" viewBox="0 0 28 28"><text x="0" y="18" font-size="30" font-style="italic" font-family="Liberation Serif,serif" fill="#84479c">ε</text><path d="M14 15h14v4l-4 2v7h-6v-7l-4-2z" fill="#bbb"/></symbol>
<symbol id="folder" viewBox="0 0 30 30"><path d="M2 3h11l3 4h12v20H2z" fill="#eee" stroke="#999" stroke-width="1.500"/></symbol>
<symbol id="foldero" viewBox="0 0 30 30"><path d="M2 1h13l3 3h10v8H2z" fill="#8d8d88"/><path d="M2 11h9l4 5h13v12H2z" fill="#eee" stroke="#bbb"/></symbol>
<symbol id="star" viewBox="0 0 30 30"><path d="M15 0l3.600 11H30l-9 7 3.500 12L15 22.500 5.500 30 9 18 0 11h11.400z" fill="#fbe04c" stroke="#c79d1a"/></symbol>
<symbol id="geoj" viewBox="0 0 30 30"><path d="M3 27L12 12M4 8l-1 18M12 4h14" stroke="#aaa" stroke-width="1.500" stroke-dasharray="2 1"/><circle cx="4" cy="7" r="2" fill="#aaa"/><circle cx="13" cy="4" r="2" fill="#aaa"/><circle cx="26" cy="4" r="2" fill="#aaa"/><circle cx="3" cy="26" r="2" fill="#aaa"/><path d="M24 10c6 2 4 17-4 18-8 0-9-7-3-10z" fill="#999" stroke="#ccc"/></symbol>
<symbol id="qlogo" viewBox="0 0 30 30"><circle cx="15" cy="14" r="11.500" fill="none" stroke="#6ea52d" stroke-width="6"/><path d="M13 11h6l11 14v4h-6L13 17z" fill="#5f9a22"/><path d="M12 10h7l3 4-4 5-6-4z" fill="#ef8a2b"/></symbol>
<symbol id="zip" viewBox="0 0 30 30"><path d="M2 1h26v28H2z" fill="#eee" stroke="#999"/><path d="M10 1h10v28H10z" fill="#444"/><path d="M15 1v14" stroke="#ddd" stroke-width="5" stroke-dasharray="2 2"/><circle cx="15" cy="20" r="3" fill="none" stroke="#eee" stroke-width="1.500"/><circle cx="15" cy="25" r="3" fill="none" stroke="#eee" stroke-width="1.500"/></symbol>
<symbol id="raster" viewBox="0 0 30 30"><path d="M2 2h26v26H2z" fill="#2f4468"/><path d="M11 2h9v9h-9zM2 11h9v8H2zM20 11h8v8h-8zM11 19h9v9h-9z" fill="#b7d0ee"/></symbol>
<symbol id="polyw" viewBox="0 0 34 26"><path d="M2 5C5 0 12 5 17 5S28 1 32 3c2 4-1 9 0 15-3 5-8 1-13 0-7-1-12 8-16 4C0 16 3 11 2 5z" fill="url(#blob)" stroke="#999"/></symbol>
<symbol id="float" viewBox="0 0 22 22"><rect x="1" y="1" width="20" height="20" rx="2" fill="none" stroke="#8a8a8a" stroke-width="1.500"/><path d="M5 9h8v8H5zM9 9V5h8v8h-4" fill="none" stroke="#8a8a8a" stroke-width="1.500"/></symbol>
<symbol id="close" viewBox="0 0 22 22"><rect x="1" y="1" width="20" height="20" rx="2" fill="none" stroke="#8a8a8a" stroke-width="1.500"/><path d="M5 5l12 12M17 5L5 17" stroke="#8a8a8a" stroke-width="2.500"/></symbol>
<symbol id="chk" viewBox="0 0 27 27"><rect width="27" height="27" rx="2" fill="#1c1c1c" stroke="#2b2b2b"/><path d="M7 14l5 6 8-14" fill="none" stroke="#e0e0e0" stroke-width="2.600"/></symbol>
<symbol id="grad" viewBox="0 0 28 30"><path d="M1 2h22v7H1z" fill="#f7c143" stroke="#c97e12" stroke-width="2"/><path d="M5 12h21v7H5z" fill="#f0502c" stroke="#b11d10" stroke-width="2"/><path d="M1 22h20v7H1z" fill="#b92218" stroke="#6f0d08" stroke-width="2"/></symbol>
<symbol id="halo" viewBox="0 0 48 36"><path d="M5 9q4-3 9 0V5q3-5 7 0l2 4q4-3 8 0 5-4 11 0 6 3 5 10 1 9-7 11H8Q1 29 1 21 0 12 5 9z" fill="#e6f0ff"/><text x="3" y="26" font-size="23" font-weight="600" font-family="Inter,sans-serif" fill="#222">abc</text></symbol>
<symbol id="cube" viewBox="0 0 44 48"><path d="M22 1l20 13-20 12L2 14z" fill="#f08a8a" stroke="#a51d1d" stroke-width="2.500"/><path d="M2 15l20 12v20L2 34z" fill="#8ae234" stroke="#4e9a06" stroke-width="2"/><path d="M42 15L22 27v20l20-13z" fill="#fce94f" stroke="#c4a000" stroke-width="2"/></symbol>
<symbol id="mesh3" viewBox="0 0 48 34"><path d="M13 2l33 2v29L2 26z" fill="#b5b5b5" stroke="#777"/><path d="M24 3l-8 24M35 4l-4 26M8 14l38 4" stroke="#777" stroke-width="2"/><path d="M24 5l10 0-4 10-10-1zM6 19l10 1-3 7z" fill="#e5e5e5"/></symbol>
<symbol id="brushes" viewBox="0 0 48 48"><path d="M9 34V8h6v12h18V8h6v26M24 14v26" fill="none" stroke="#b8802a" stroke-width="5"/><path d="M15 1h19v13H15z" fill="#f07070" stroke="#b32b2b"/><path d="M1 34h20v13H1z" fill="#f9e86a" stroke="#b3971c"/><path d="M27 34h20v13H27z" fill="#8ab8ee" stroke="#3f6fae"/></symbol>
<symbol id="hist" viewBox="0 0 40 40"><path d="M3 20C1 8 10 4 17 6V1l9 9-9 8v-6c-6 0-7 6-3 8z" fill="#6aa771" stroke="#3f7848"/><path d="M37 24c2 9-4 13-11 12l-1 4-7-9 9-8v5c5 0 4-6 0-8 5-1 9 1 10 4z" fill="#e5803c" stroke="#a34c14"/></symbol>
<symbol id="quant" viewBox="0 0 32 32"><rect x="1" y="1" width="30" height="30" rx="2" fill="#b0b0b0" stroke="#c9b13a" stroke-width="2.500"/><path d="M6 8v17M16 8v17M26 8v17" stroke="#111" stroke-width="4" stroke-dasharray="4 2.500"/><path d="M11 2v28M21 2v28" stroke="#7fa9e0" stroke-width="2"/></symbol>
</defs>
</svg>

<header class="titlebar"><i class="light r"></i><i class="light y"></i><i class="light g"></i><h1>*kentucky_explorer — QGIS</h1></header>

<nav class="bar">
<b class="grip first"></b><svg class="t"><use href="#new"/></svg><svg class="t"><use href="#open"/></svg><svg class="t"><use href="#save"/></svg><svg class="t"><use href="#layout"/></svg><svg class="t"><use href="#wrenchdoc"/></svg><svg class="t"><use href="#style"/></svg>
<b class="grip"></b><span class="t press"><svg><use href="#hand"/></svg></span><svg class="t off"><use href="#pansel"/></svg><svg class="t"><use href="#zin"/></svg><svg class="t"><use href="#zout"/></svg><svg class="t"><use href="#zfull"/></svg><svg class="t off"><use href="#zsel"/></svg><svg class="t"><use href="#zlay"/></svg><svg class="t off"><use href="#znat"/></svg><svg class="t"><use href="#zlast"/></svg><svg class="t off"><use href="#znext"/></svg><svg class="t"><use href="#newmap"/></svg><svg class="t"><use href="#new3d"/></svg><svg class="t"><use href="#newbook"/></svg><svg class="t"><use href="#bookm"/></svg><svg class="t"><use href="#clock"/></svg><svg class="t"><use href="#refresh"/></svg>
<b class="grip"></b><svg class="t"><use href="#sel1"/></svg><i class="dd"></i><svg class="t"><use href="#sel2"/></svg><i class="dd"></i><svg class="t"><use href="#sel3"/></svg><i class="dd"></i><svg class="t"><use href="#sel4"/></svg><i class="dd"></i>
<b class="grip"></b><svg class="t"><use href="#ident"/></svg><svg class="t"><use href="#abacus"/></svg><svg class="t"><use href="#gear"/></svg><svg class="t"><use href="#sigma"/></svg><svg class="t"><use href="#table"/></svg><i class="dd"></i><svg class="t"><use href="#measure"/></svg><i class="dd"></i><svg class="t"><use href="#tip"/></svg><svg class="t dim"><use href="#action"/></svg><i class="dd"></i>
<b class="grip"></b><svg class="t"><use href="#dots"/></svg><b class="grip"></b><svg class="t"><use href="#magnet"/></svg><span class="t corner"><svg class="off"><use href="#vtx"/></svg></span><span class="t corner press2"><svg class="off"><use href="#vdots"/></svg></span>
<span class="field spin tb12"><em>12</em><i class="ud"></i></span><span class="combo tbpx"><em>px</em><i class="cd"></i></span><svg class="t"><use href="#topo"/></svg><span class="t corner"><svg><use href="#foot"/></svg></span>
</nav>
<nav class="bar">
<b class="grip first"></b><svg class="t"><use href="#dsm"/></svg><svg class="t"><use href="#geopkg"/></svg><svg class="t"><use href="#shp"/></svg><svg class="t"><use href="#feather"/></svg><svg class="t"><use href="#chip"/></svg><svg class="t"><use href="#mesh"/></svg><svg class="t"><use href="#virt"/></svg>
<b class="grip"></b><span class="t corner"><svg class="off"><use href="#pens"/></svg></span><svg class="t"><use href="#pen"/></svg><svg class="t off"><use href="#savee"/></svg><svg class="t off"><use href="#digi"/></svg><i class="dd"></i><svg class="t off"><use href="#poly"/></svg><svg class="t off"><use href="#tools"/></svg><i class="dd"></i><svg class="t off"><use href="#mod"/></svg><svg class="t off"><use href="#trash"/></svg><svg class="t off"><use href="#cut"/></svg><svg class="t off"><use href="#copy"/></svg><svg class="t off"><use href="#paste"/></svg><svg class="t off tan"><use href="#undo"/></svg><svg class="t off sage"><use href="#redo"/></svg>
<b class="grip near"></b><svg class="t yel"><use href="#abc"/></svg><svg class="t"><use href="#diag"/></svg><i class="sep"></i><svg class="t"><use href="#pinlab"/></svg><svg class="t"><use href="#redlab"/></svg><i class="sep"></i><svg class="t off"><use href="#lb1"/></svg><svg class="t off"><use href="#lb2"/></svg><svg class="t off"><use href="#lb3"/></svg><svg class="t off"><use href="#lb4"/></svg><svg class="t off"><use href="#lb5"/></svg>
<b class="grip far"></b><svg class="t"><use href="#globe"/></svg><b class="grip"></b><svg class="t"><use href="#python"/></svg><svg class="t"><use href="#grid"/></svg><b class="grip"></b><svg class="t"><use href="#help"/></svg><b class="grip"></b><b class="grip"></b><svg class="t"><use href="#s1"/></svg><i class="dd"></i><svg class="t"><use href="#s2"/></svg><svg class="t"><use href="#s3"/></svg><svg class="t"><use href="#s4"/></svg><svg class="t"><use href="#s5"/></svg><svg class="t"><use href="#s6"/></svg><i class="dd"></i><svg class="t"><use href="#s7"/></svg>
</nav>
<nav class="bar last">
<b class="grip first"></b><svg class="t"><use href="#gsearch"/></svg><svg class="t"><use href="#osm"/></svg><b class="grip"></b><svg class="t"><use href="#hillsh"/></svg><b class="grip"></b><svg class="t"><use href="#georef"/></svg><svg class="t off"><use href="#cross"/></svg><i class="sep"></i><span class="t corner"><svg><use href="#adv"/></svg></span><svg class="t off"><use href="#crossp"/></svg><svg class="t"><use href="#polyg"/></svg><svg class="t off"><use href="#sweep"/></svg><i class="sep"></i><svg class="t"><use href="#info"/></svg><span class="t corner"><svg><use href="#wrench"/></svg></span><b class="grip"></b><svg class="t"><use href="#arc"/></svg>
</nav>

<main>
<aside class="left">
<div class="ptitle"><span>Browser</span><svg><use href="#float"/></svg><svg><use href="#close"/></svg></div>
<div class="ptools"><svg><use href="#addl"/></svg><svg class="big"><use href="#refresh"/></svg><svg><use href="#filter"/></svg><svg><use href="#coll"/></svg><svg class="big"><use href="#info"/></svg></div>
<div class="browser">
<ul class="tree">
<li class="l0"><i class="r"></i><svg><use href="#folder"/></svg>/Volumes</li>
<li class="l0"><i class="d"></i><svg><use href="#star"/></svg>Favorites</li>
<li class="l1"><i class="d"></i><svg><use href="#foldero"/></svg>/Users/boyd/Documents/YodasMaps</li>
<li class="l2"><i class="r"></i><svg><use href="#folder"/></svg>lab-01</li>
<li class="l2"><i class="r"></i><svg><use href="#folder"/></svg>lab-02</li>
<li class="l2"><i class="d"></i><svg><use href="#foldero"/></svg>lab-03</li>
<li class="l3"><i class="d"></i><svg><use href="#foldero"/></svg>Kentucky_explorer</li>
<li class="l4"><i class="r"></i><svg><use href="#folder"/></svg>Kentucky_State_Park_Trails_shp</li>
<li class="l4 less"><i class="r"></i><svg><use href="#geoj"/></svg>CensusCounties_2020.geojson</li>
<li class="l4 less"><i class="r"></i><svg><use href="#qlogo"/></svg>kentucky_explorer</li>
<li class="l4 cur"><i class="r"></i><svg><use href="#zip"/></svg>Kentucky_State_Park_Boundaries.zip</li>
<li class="l4"><i class="r"></i><svg><use href="#zip"/></svg>Kentucky_State_Park_Trails_shp.zip</li>
<li class="l4"><i></i><svg><use href="#raster"/></svg>ky-250.tif</li>
</ul>
<div class="vscroll"><i class="up"></i><b></b><i class="dn"></i></div>
</div>
<div class="split"></div>
<div class="ptitle lay"><span>Layers</span><svg><use href="#float"/></svg><svg><use href="#close"/></svg></div>
<div class="ptools lay"><span class="pressed"><svg><use href="#brush"/></svg></span><svg><use href="#group"/></svg><span class="menu"><svg><use href="#eye"/></svg></span><span class="menu"><svg><use href="#filter"/></svg></span><svg class="tight"><use href="#eps"/></svg><i class="dd"></i><svg><use href="#expd"/></svg><svg><use href="#coll"/></svg><svg><use href="#reml"/></svg></div>
<div class="layers">
<div class="lr"><svg class="ck"><use href="#chk"/></svg><i class="sq"></i>Kentucky_State_Park_Boundaries — Kentucky State Park</div>
<div class="lr cur"><svg class="ck"><use href="#chk"/></svg><svg class="pw"><use href="#polyw"/></svg><u>CensusCounties_2020</u></div>
<div class="cls"><svg class="ck"><use href="#chk"/></svg><i class="c1"></i>2193 - 11048</div>
<div class="cls"><svg class="ck"><use href="#chk"/></svg><i class="c2"></i>11048 - 15440</div>
<div class="cls"><svg class="ck"><use href="#chk"/></svg><i class="c3"></i>15440 - 23950</div>
<div class="cls"><svg class="ck"><use href="#chk"/></svg><i class="c4"></i>23950 - 44547</div>
<div class="cls"><svg class="ck"><use href="#chk"/></svg><i class="c5"></i>44547 - 782969</div>
<div class="lr ky"><svg class="ck"><use href="#chk"/></svg><svg class="ras"><use href="#raster"/></svg>ky-250</div>
<div class="band">Band 1 (Gray)</div>
<div class="ramp"><i></i><div><span>4,123.73</span><span>-90.3101</span></div></div>
</div>
<div class="hscroll"><i class="lt"></i><b></b><i class="rt"></i></div>
</aside>

<section class="canvas">
<svg class="map" viewBox="836 290 1592 1686">
<g class="cty" transform="translate(900 1180) scale(.35714 .33333)">
<g class="c1">
<path d="M92 1135L100 1126 118 1122 135 1127 145 1142 146 1165 136 1184 108 1184 96 1168Z"/>
<path d="M173 1185L180 1160 190 1140 198 1100 210 1092 225 1096 235 1112 248 1135 262 1141 280 1133 290 1115 292 1095 308 1082 325 1090 345 1105 380 1126 425 1131 447 1142 462 1165 481 1193 400 1189 230 1184Z"/>
<path d="M308 1082L304 1052 292 1035 291 1015 305 1006 330 1010 340 1000 338 990 350 983 363 992 366 1000 495 1003 491 1193 481 1193 462 1165 447 1142 425 1131 380 1126 345 1105Z"/>
<path d="M352 880L340 915 325 943 307 952 304 975 315 988 338 990 350 983 363 992 366 1000 495 1003 499 878 450 884 405 896 375 888 362 895 357 884Z"/>
<path d="M420 680L443 683 499 878 450 884 405 896 375 888 362 895 357 884 352 858 325 845 311 825 310 800 325 775 350 755 357 733 380 702Z"/>
<path d="M722 552L751 568 774 573 779 610 800 640 822 665 830 690 822 722 835 745 832 760 820 757 812 775 816 800 810 820 818 855 808 865 785 835 768 813 740 806 705 815 690 830 678 834 660 828 638 800 660 802 690 797 705 770 709 745 700 715 680 690 665 660 667 630 683 608 688 575 700 558Z"/>
<path d="M751 568L765 545 790 533 840 530 895 522 908 500 925 492 934 472 942 490 955 525 968 522 973 560 985 575 1010 575 1015 565 1022 590 1040 600 895 695 888 730 870 742 850 755 835 760 835 745 822 722 830 690 822 665 800 640 779 610 774 573Z"/>
<path d="M1252 386L1375 445 1410 463 1440 470 1405 530 1395 525 1407 540 1405 575 1370 577 1350 597 1303 592 1278 560 1276 510 1266 463 1255 450 1218 446 1203 428 1205 408 1222 394Z"/>
<path d="M888 730L912 735 935 780 950 815 997 885 930 918 850 945 830 900 808 865 818 855 810 820 816 800 812 775 822 757 840 763 865 748Z"/>
</g>
<g class="c2">
<path d="M977 235L985 228 1035 318 1055 325 1070 335 1072 385 1079 412 970 520 955 525 942 490 934 472 925 492 908 500 895 480 870 455 863 420 857 395 875 360 913 335 925 295 945 293 965 313 978 300 993 290 990 262Z"/>
<path d="M1079 412L1205 408 1205 430 1218 446 1255 450 1268 468 1200 520 1150 537 1040 600 1022 590 1015 565 1010 575 985 575 970 545 970 520Z"/>
<path d="M1030 605L1015 635 1040 650 1040 690 1052 715 1098 757 1092 790 1087 830 1055 878 1005 892 990 878 950 815 935 780 912 735 888 730 890 698Z"/>
<path d="M850 945L930 918 997 885 1005 892 1055 878 1073 862 1107 884 1102 1000 1098 1060 1088 1115 1003 1115 1003 1098 890 1082 868 1030 858 990Z"/>
<path d="M1322 828L1335 835 1390 835 1430 826 1427 1030 1423 1115 1280 1115 1300 975Z"/>
</g>
<g class="c4">
<path d="M500 882L675 890 664 1200 491 1193Z"/>
<path d="M678 834L690 830 705 815 740 806 768 813 785 835 805 865 830 900 838 930 848 948 860 1000 862 1032 673 1025Z"/>
<path d="M673 1025L862 1032 870 1048 888 1083 900 1130 905 1180 898 1212 800 1208 664 1200Z"/>
<path d="M1303 592L1350 597 1370 577 1405 575 1410 605 1390 625 1400 637 1415 610 1440 608 1465 640 1472 680 1495 700 1512 715 1505 770 1515 800 1475 818 1430 826 1390 835 1335 835 1318 815 1290 785 1288 755 1295 735 1257 685 1263 655 1280 645 1283 625Z"/>
</g>
<g class="c5">
<path d="M443 683L480 695 515 715 545 742 580 750 615 770 638 800 655 825 678 834 675 890 500 882Z"/>
<path d="M985 228L988 210 1002 205 1018 220 1030 240 1055 240 1070 232 1098 233 1110 226 1118 238 1112 262 1125 278 1145 275 1158 260 1155 237 1140 215 1148 195 1157 175 1167 190 1172 205 1200 222 1215 212 1230 200 1262 202 1280 218 1308 237 1300 285 1320 318 1305 340 1260 350 1252 386 1222 394 1205 408 1079 412 1072 385 1070 335 1055 325 1035 318Z"/>
<path d="M1308 237L1350 268 1385 278 1400 313 1425 310 1440 275 1443 235 1480 215 1482 232 1508 240 1515 278 1540 283 1560 320 1558 350 1537 368 1557 395 1510 427 1490 428 1440 470 1410 463 1375 445 1252 386 1260 350 1305 340 1320 318 1300 285Z"/>
<path d="M1268 468L1276 510 1278 560 1303 592 1300 610 1283 625 1280 645 1263 655 1257 685 1280 710 1295 735 1288 755 1270 770 1205 773 1185 788 1150 775 1100 757 1070 735 1052 710 1040 690 1040 650 1015 635 1040 600 1150 537 1200 520Z"/>
<path d="M1098 757L1150 775 1185 788 1205 773 1270 770 1285 755 1290 785 1318 815 1322 828 1300 975 1280 1115 1088 1115 1098 1060 1102 1000 1107 884 1073 862 1087 830 1092 790Z"/>
</g>
<g class="park"><path d="M775 845l8-6 3 8-5 12-8 5zM850 1003l10 8 2 20-12-4zM962 963l16-10 6 26-16 14-8-8zM1105 803l8 4-4 8zM880 812l20-12-10 14z"/></g>
</g>
<g class="cty" transform="translate(1400 940) scale(.35714 .40816)">
<g class="c1">
<path d="M80 765L110 757 140 730 163 723 177 735 190 765 210 782 240 772 250 778 245 810 233 842 258 918 158 876 160 840 150 820 118 812 125 795 115 778 82 775Z"/>
<path d="M712 1205L750 1197 775 1225 833 1237 848 1295 878 1327 865 1365 820 1385 805 1378 808 1400 795 1395 722 1390 712 1240 705 1222Z"/>
<path d="M885 427L887 395 877 370 868 320 885 300 932 303 975 355 995 388 1015 392 960 438 940 437Z"/>
<path d="M932 303L970 297 985 318 1010 327 1040 318 1090 288 1105 315 1135 342 1110 360 1065 382 995 388 975 355Z"/>
<path d="M1090 288L1115 275 1165 265 1195 270 1192 240 1210 232 1275 273 1217 282 1213 310 1170 325 1135 342 1105 315Z"/>
<path d="M878 1337L990 1343 970 1360 1000 1385 968 1480 960 1515 883 1520 855 1485 862 1457 835 1450 805 1425 800 1400 820 1385 865 1365Z"/>
<path d="M1000 1372L1050 1397 1080 1382 1105 1415 1103 1470 1113 1517 960 1515 968 1480 1000 1390Z"/>
</g>
<g class="c2">
<path d="M262 1073L328 1092 345 1115 373 1200 345 1207 325 1192 262 1193 245 1240 232 1298 200 1285 140 1262 95 1257 115 1245 103 1215 110 1172 155 1135 160 1108 175 1108 188 1122Z"/>
<path d="M340 1113L505 1108 557 1175 547 1268 485 1255 470 1240 438 1250 373 1200Z"/>
<path d="M600 1457L700 1393 722 1390 795 1395 805 1425 835 1450 862 1457 855 1485 883 1520 700 1518 600 1512 610 1497Z"/>
<path d="M765 1057L765 1040 790 1033 803 1037 840 1080 865 1115 900 1165 920 1190 833 1237 775 1225 750 1197 755 1130 748 1090Z"/>
<path d="M752 882L795 905 800 940 787 985 815 998 830 980 850 995 862 1027 803 1037 790 1033 765 1045 765 1057 643 1045 650 990 695 940 735 905Z"/>
<path d="M1345 267L1410 255 1495 220 1512 385 1405 400 1390 412 1375 410Z"/>
<path d="M1213 310L1220 365 1265 395 1285 425 1317 450 1245 520 1213 525 1165 513 1158 480 1130 470 1120 440 1095 425 1100 400 1068 385 1110 360 1170 325Z"/>
<path d="M903 885L930 857 945 830 1000 800 1045 778 1095 788 1105 810 1092 937 975 937 920 915Z"/>
</g>
<g class="c3">
<path d="M158 876L258 918 252 945 270 970 275 985 240 980 262 1073 188 1122 175 1108 160 1105 155 1135 110 1172 72 1145 68 1125 45 1090 20 1084 0 1108 -10 1098 10 1080 5 1025 40 972 90 938 110 937 157 911 138 890Z"/>
<path d="M313 700L330 702 460 790 508 840 443 960 395 970 345 962 320 945 290 958 275 982 252 945 258 918 233 842 243 815 272 805 275 775 312 765Z"/>
<path d="M258 1365L275 1395 370 1412 367 1498 330 1502 285 1510 275 1502 180 1500 185 1465 195 1425 225 1375Z"/>
<path d="M370 1425L400 1402 455 1352 480 1345 515 1352 545 1378 570 1437 598 1455 610 1497 600 1512 367 1498Z"/>
<path d="M565 1042L765 1057 748 1090 755 1130 750 1197 640 1215 557 1203 557 1175 505 1105 545 1103 568 1068Z"/>
<path d="M960 437L1015 390 1065 382 1100 400 1095 425 1120 440 1130 470 1158 480 1165 513 1110 530 958 518 940 490 930 460 940 440Z"/>
<path d="M1338 440L1372 425 1375 412 1405 400 1512 387 1535 405 1530 435 1565 450 1525 505 1470 545 1430 557 1400 558 1388 520 1382 495 1350 470Z"/>
<path d="M1085 660L1105 652 1178 668 1190 690 1195 745 1125 757 1100 788 1070 785 1045 778 1027 780 1025 740 1053 700Z"/>
<path d="M888 645L1053 700 1025 740 905 758 845 720 860 685Z"/>
<path d="M1100 788L1125 757 1205 748 1225 790 1262 808 1268 850 1262 888 1245 887 1097 908 1105 830Z"/>
<path d="M1262 825L1330 875 1360 860 1385 905 1420 945 1448 985 1440 1022 1398 1017 1290 945 1265 890Z"/>
<path d="M903 890L920 915 975 937 1092 937 1087 1060 1065 1060 1020 1035 972 1058 940 1035 862 1027 850 995 843 975 870 920Z"/>
<path d="M1092 988L1165 992 1185 988 1187 1050 1220 1078 1255 1095 1258 1157 1160 1237 1135 1237 1085 1192 1080 1152 1023 1122 1035 1090 1067 1062 1087 1060Z"/>
<path d="M833 1237L920 1190 960 1157 1010 1147 1023 1122 1080 1152 1085 1195 1005 1300 990 1343 878 1337 878 1327 848 1295Z"/>
<path d="M1087 1195L1135 1237 1160 1240 1162 1272 1200 1303 1165 1330 1140 1325 1135 1350 1050 1397 970 1360 990 1343 1005 1300Z"/>
<path d="M1085 1382L1135 1350 1140 1325 1165 1330 1200 1303 1240 1320 1282 1310 1310 1350 1333 1375 1330 1405 1285 1440 1235 1523 1113 1517 1103 1470 1105 1415Z"/>
<path d="M1398 1017L1440 1022 1450 990 1528 993 1550 1040 1547 1075 1563 1105 1520 1140 1510 1165 1487 1197 1375 1107Z"/>
</g>
<g class="c4">
<path d="M330 702L355 695 362 680 347 665 350 652 370 658 390 645 415 648 417 635 392 625 392 612 405 610 440 640 445 690 475 710 500 718 535 715 555 730 568 747 575 730 590 727 597 800 580 828 508 840 460 790Z"/>
<path d="M240 980L275 985 290 958 320 945 345 962 395 970 443 962 530 978 555 1005 568 1045 565 1072 545 1103 505 1105 340 1113 328 1092 262 1073Z"/>
<path d="M30 1262L95 1257 140 1262 232 1298 258 1365 225 1375 195 1425 185 1465 180 1500 22 1500 27 1430Z"/>
<path d="M552 1205L640 1215 705 1205 712 1240 722 1390 700 1393 600 1457 575 1437 560 1425 545 1378 512 1355 498 1345 523 1268 547 1268Z"/>
<path d="M1217 282L1275 275 1297 262 1345 267 1372 425 1338 440 1317 447 1275 410 1265 395 1220 365Z"/>
<path d="M1178 668L1180 642 1250 615 1285 622 1297 660 1288 720 1260 800 1225 790 1205 750 1190 700Z"/>
<path d="M1097 908L1245 887 1270 895 1290 940 1225 968 1165 992 1092 988Z"/>
<path d="M803 1037L862 1027 940 1035 972 1058 1020 1035 1067 1062 1035 1090 1020 1122 1010 1147 960 1157 920 1190 900 1165 865 1115 840 1080Z"/>
<path d="M1185 988L1225 968 1290 945 1398 1017 1375 1105 1343 1093 1258 1155 1255 1095 1220 1078 1187 1050Z"/>
</g>
<g class="c5">
<path d="M590 727L622 722 640 740 660 757 680 785 722 822 725 840 752 880 735 905 695 940 650 990 643 1045 565 1042 555 1005 530 978 443 960 508 840 580 828 597 800Z"/>
<path d="M258 1193L325 1192 345 1207 370 1200 438 1250 470 1240 485 1255 523 1268 498 1345 455 1350 430 1380 370 1425 370 1412 275 1395 258 1365 232 1298 245 1240Z"/>
<path d="M722 835L760 830 800 805 810 780 845 733 905 757 1025 742 1027 778 1005 800 970 810 945 835 930 857 905 885 875 920 843 980 815 998 787 985 800 940 795 905 752 882 725 850Z"/>
<path d="M625 722L660 700 735 677 820 682 885 662 842 718 848 735 810 780 800 805 760 830 722 835 722 822 680 785 660 757 640 740Z"/>
<path d="M783 515L808 530 895 572 885 662 820 682 735 677 660 700 622 722 635 690 635 630 668 600 672 570 700 560 720 570 755 553 772 530Z"/>
<path d="M855 450L870 428 890 425 940 437 930 460 940 490 958 518 940 545 865 555 808 530 778 510 790 470 830 462Z"/>
<path d="M958 518L1110 530 1125 535 1105 570 1100 650 1080 665 1053 700 885 645 895 572 865 555 940 545Z"/>
<path d="M1157 112L1190 80 1213 75 1232 60 1260 88 1297 102 1308 210 1303 262 1275 273 1210 230 1213 210 1165 203 1165 190 1188 165 1180 145Z"/>
<path d="M1297 102L1325 97 1335 88 1358 95 1368 140 1390 155 1383 180 1390 210 1383 240 1400 257 1345 267 1303 265 1308 210Z"/>
<path d="M1358 95L1368 76 1388 76 1392 112 1440 118 1460 135 1465 165 1497 208 1495 218 1400 257 1383 240 1390 210 1383 180 1390 155 1368 140Z"/>
<path d="M1110 530L1158 513 1213 525 1243 522 1248 612 1180 642 1178 668 1100 652 1105 570 1125 535Z"/>
<path d="M1333 440L1350 475 1382 500 1390 545 1408 600 1295 650 1285 622 1248 612 1243 522 1317 450Z"/>
<path d="M1408 600L1437 605 1435 660 1480 680 1475 710 1460 740 1452 780 1440 785 1400 790 1385 755 1340 735 1288 720 1297 655Z"/>
<path d="M1288 720L1340 735 1385 755 1402 800 1385 830 1355 855 1330 875 1300 840 1260 800Z"/>
<path d="M1343 1093L1487 1200 1470 1250 1475 1280 1455 1327 1415 1338 1338 1372 1282 1310 1240 1320 1200 1303 1162 1272 1162 1235Z"/>
</g>
<g class="park"><path d="M962 706l16-6 10 8-18 8zM930 1136l12 4-4 8-8 2zM1062 1360l20-18 22 2-26 22zM948 1494l20-4 2 16-18 8zM1352 631l10 2-6 4zM545 1374l10 6-6 10zM1445 1380l20-4 4 14-14 4zM28 1250l10-2-2 8zM1018 336l12 2-4 6zM1464 304l12 1-4 6zM1118 910l14-2-2 10zM310 942l16-2-6 10z"/></g>
</g>
<g class="cty" transform="translate(1900 940) scale(.33333 .40816)">
<g class="c5">
<path d="M-43 860L-20 835 0 805 30 790 55 775 95 772 120 790 200 815 195 920 182 935 197 968 150 975 135 995 50 988 20 940 -15 905Z"/>
<path d="M182 1105L210 1120 240 1143 288 1148 277 1195 300 1220 330 1235 325 1258 300 1295 235 1305 205 1317 125 1317 60 1325 78 1280 73 1240 93 1200 105 1160 135 1130Z"/>
<path d="M1028 885L1115 883 1143 873 1137 858 1180 845 1200 880 1245 892 1290 925 1300 945 1388 955 1215 1090 1185 1118 1120 1135 1062 1162 1040 1140 1020 1138 985 1140 970 1125 1000 1100 1005 1070 1028 1055 1040 1010 1022 985Z"/>
<path d="M970 412L1008 430 1018 460 1018 500 1030 520 1028 555 1013 550 975 552 910 565 915 495 898 487Z"/>
</g>
<g class="c4">
<path d="M80 1328L125 1317 205 1317 215 1365 265 1410 285 1445 328 1470 290 1497 303 1530 130 1527 85 1480 65 1415 78 1380Z"/>
<path d="M208 1320L235 1305 300 1298 330 1265 370 1275 440 1308 500 1323 495 1340 465 1355 435 1385 378 1407 360 1440 328 1470 285 1445 265 1410 215 1365Z"/>
<path d="M328 1470L360 1440 378 1407 435 1385 500 1340 500 1318 543 1328 548 1380 543 1430 568 1478 530 1480 465 1505 440 1530 303 1530 290 1497Z"/>
<path d="M543 1350L595 1350 600 1335 680 1300 720 1278 740 1285 738 1305 800 1295 860 1275 900 1298 900 1335 880 1352 785 1370 755 1410 752 1432 690 1445 590 1478 568 1478 543 1430 550 1390Z"/>
<path d="M508 1097L560 1075 590 1090 690 1035 742 1050 750 1145 785 1150 812 1170 795 1190 787 1245 790 1270 765 1285 720 1275 720 1235 698 1215 700 1190 630 1155 620 1125 590 1107 555 1120 530 1145 510 1120Z"/>
<path d="M840 868L885 858 945 848 1005 858 1045 878 1028 890 1022 985 1040 1010 1028 1055 1005 1070 1000 1100 975 1110 955 1085 945 1035 912 1035 905 1010 862 1000 875 965 860 908Z"/>
<path d="M197 653L255 610 265 630 315 640 345 670 375 710 372 765 330 772 262 755Z"/>
<path d="M85 680L197 653 262 755 250 765 240 808 200 815 150 795 95 770 55 775 65 740 85 715Z"/>
<path d="M540 492L565 487 585 505 608 530 628 590 668 605 683 612 665 635 600 680 545 697 535 670 500 655 460 630 455 608 490 580 513 550 520 512Z"/>
<path d="M768 292L805 288 835 270 855 272 857 305 868 350 900 378 940 380 972 405 900 485 810 478 770 440 703 420 735 385 740 360 760 340Z"/>
<path d="M703 422L770 440 810 478 895 485 915 495 910 565 870 600 845 607 765 600 720 568 700 558 670 580 668 600 628 590 608 530 662 515 662 465 690 425Z"/>
</g>
<g class="c3">
<path d="M0 560L50 553 133 508 150 540 185 570 210 590 255 605 240 630 197 653 85 680 65 665 38 655 40 615 10 600Z"/>
<path d="M-66 1372L15 1335 55 1325 80 1330 75 1380 62 1420 78 1460 130 1527 0 1530 -177 1523 -123 1440 -75 1405Z"/>
<path d="M315 1140L330 1115 375 1095 430 1097 445 1087 475 1110 520 1140 530 1165 508 1190 515 1250 530 1320 500 1318 440 1308 370 1275 325 1255 330 1235 300 1220 277 1195 288 1148Z"/>
<path d="M812 1170L835 1175 890 1135 975 1122 1020 1140 1062 1162 975 1210 975 1250 900 1290 855 1273 740 1308 738 1295 765 1285 790 1270 787 1245 795 1190Z"/>
<path d="M845 607L900 570 975 552 1013 550 1018 590 1000 605 1005 625 1045 655 1068 698 1098 712 1080 735 1050 725 1025 745 1018 768 955 755 870 718 820 708 795 720 795 700 830 672 858 640Z"/>
<path d="M800 720L825 708 870 718 955 757 1020 768 990 790 1000 800 990 820 1005 858 945 848 840 868 832 828 805 790 820 760 815 735Z"/>
<path d="M285 277L312 280 325 300 350 312 360 338 400 350 432 350 440 380 435 413 318 453 272 437 258 415 243 378Z"/>
</g>
<g class="c2">
<path d="M740 1015L760 985 800 985 860 1000 905 1010 912 1035 945 1035 955 1085 970 1115 890 1130 830 1175 785 1150 750 1140Z"/>
<path d="M1020 768L1025 745 1050 725 1085 732 1130 760 1135 795 1185 835 1180 845 1137 858 1143 873 1115 883 1045 878 1005 855 990 820 1000 800 990 788Z"/>
<path d="M735 770L800 780 832 828 838 880 860 908 875 965 860 1000 810 975 800 945 760 928 735 933 665 898 668 870 655 845 690 820 738 790Z"/>
<path d="M515 922L535 930 560 915 575 888 665 898 735 933 760 925 800 945 810 975 838 990 765 983 740 1015 742 1050 690 1035 645 1062 590 1090 560 1075 510 1097 505 1040 490 1000Z"/>
<path d="M555 690L600 680 650 652 655 680 685 703 760 708 790 703 800 725 820 750 805 780 738 770 735 790 690 820 655 845 665 885 620 835 580 812 525 795 530 770 553 745Z"/>
<path d="M140 990L165 970 225 968 275 960 305 975 320 1015 350 1060 375 1092 330 1115 315 1140 270 1147 240 1140 210 1120 175 1100 175 1080 160 1060 158 1040Z"/>
<path d="M185 815L265 808 268 832 310 857 380 862 410 875 350 908 352 925 325 940 305 975 275 960 197 968 182 935 195 920 200 860Z"/>
<path d="M250 760L300 770 370 770 400 790 448 812 440 840 415 880 375 857 310 857 268 832 265 808 243 800Z"/>
<path d="M258 605L325 543 385 550 410 570 415 600 455 610 460 630 500 655 535 670 535 687 480 682 475 700 400 705 375 712 345 670 315 640 265 630Z"/>
<path d="M272 437L318 453 435 415 465 435 470 462 540 490 515 515 513 550 490 580 455 608 415 600 410 570 385 550 325 540 320 520 285 500 262 468 250 460Z"/>
<path d="M435 330L455 318 500 308 530 322 600 330 615 355 628 365 650 348 715 350 720 330 768 300 760 340 740 360 735 385 700 420 690 425 662 465 662 515 610 525 585 505 565 487 540 490 470 462 465 435 435 413 440 380Z"/>
</g>
<g class="c1">
<path d="M555 1120L590 1107 620 1125 630 1155 700 1190 698 1215 722 1240 718 1278 680 1305 600 1333 595 1350 543 1350 530 1320 530 1270 510 1240 508 1190 530 1165 525 1145Z"/>
<path d="M450 812L520 797 580 812 620 835 665 885 660 895 580 888 560 915 535 930 495 915 415 880 440 840Z"/>
<path d="M348 908L400 877 440 890 515 920 490 1000 450 980 425 1000 400 995 390 1010 345 1010 315 995 305 975 325 940 352 925Z"/>
<path d="M315 1000L345 1010 390 1010 400 995 425 998 450 980 490 1000 508 1040 510 1130 475 1110 440 1088 375 1092 350 1060 320 1015Z"/>
<path d="M375 715L400 705 475 700 480 682 535 685 557 695 553 745 530 770 520 797 450 812 400 790 372 765Z"/>
<path d="M133 505L180 455 230 465 265 470 285 500 325 530 325 543 258 605 210 590 185 570 150 540Z"/>
<path d="M137 405L170 395 190 375 245 380 258 415 272 437 245 462 180 455 140 430Z"/>
<path d="M105 250L140 260 200 273 260 265 285 277 243 378 205 373 190 375 170 395 137 405 122 390Z"/>
<path d="M668 600L675 575 700 558 740 575 765 600 845 607 858 640 830 672 795 703 740 708 685 703 655 680 650 652 683 612Z"/>
</g>
<g class="park"><path d="M836 418l16-5 13 8-6 12-18-2zM710 490l18-2 6 14-12 0zM768 590l16-6 6 8-14 4zM964 648l12-2 0 18-10-2zM406 842l24-4 2 14-14 8zM946 866l8-2 14 12-14 4zM1190 1102l28-4-4 18-18 4zM822 1282l30-6-12 10zM402 1440l14-8 20 4-20 6zM228 1240l8 2-6 6zM566 1110l8 0-2 6zM232 462l34-2-26 12zM70 303l10 2-6 6zM870 793l10 3-8 3zM1134 1020l6 2-4 4z"/></g>
</g>
</svg>
</section>

<aside class="right">
<div class="ptitle"><span>Layer Styling</span><svg><use href="#float"/></svg><svg><use href="#close"/></svg></div>
<div class="combo big"><svg class="pw"><use href="#polyw"/></svg><em>CensusCounties_2020</em><i class="cd"></i></div>
<div class="sty">
<div class="vtabs"><svg class="on"><use href="#brush"/></svg><span><svg class="yel"><use href="#abc"/></svg></span><span><svg><use href="#halo"/></svg></span><span><svg><use href="#cube"/></svg></span><span><svg><use href="#mesh3"/></svg></span><span><svg><use href="#brushes"/></svg></span><span><svg class="sm"><use href="#hist"/></svg></span></div>
<div class="form">
<div class="combo grd"><svg class="gi"><use href="#grad"/></svg><em>Graduated</em><i class="cd"></i></div>
<div class="row val"><label>Value</label><div class="field fv"><small>123</small><em>Pop2020</em><i class="drop"><i class="cd"></i></i></div><button class="btn ep"><span>ε</span></button></div>
<div class="row sym"><label>Symbol</label><div class="btn sw"><i class="symfill"></i></div><div class="btn mini"><i class="ar"></i></div></div>
<div class="row leg"><label>Legend format</label><div class="field fmt">%1 - %2</div><div class="field spin pr"><em>'recision (</em><svg class="clr" viewBox="0 0 28 24"><path d="M1 12L8 1h19v22H8z" fill="#d0d0d0"/><path d="M11 6l11 12M22 6L11 18" stroke="#222" stroke-width="2.500"/></svg><i class="ud"></i></div><svg class="ck"><use href="#chk"/></svg><label class="trim">Trim</label></div>
<div class="row crp"><label>Color ramp</label><div class="btn sw"><i class="rampfill"></i></div><div class="btn mini"><i class="ar"></i></div></div>
<div class="tabs"><span class="on">Classes</span><span>Histogram</span></div>
<div class="table">
<div class="th"><span>Symbol<i class="ar"></i></span><span>Values</span><span>Legend</span></div>
<div class="tr"><svg class="ck"><use href="#chk"/></svg><i class="c1"></i><span>2193.00 - 11047.60</span><span>2193 - 11048</span></div>
<div class="tr"><svg class="ck"><use href="#chk"/></svg><i class="c2"></i><span>11047.60 - 15439.60</span><span>11048 - 15440</span></div>
<div class="tr"><svg class="ck"><use href="#chk"/></svg><i class="c3"></i><span>15439.60 - 23950.00</span><span>15440 - 23950</span></div>
<div class="tr"><svg class="ck"><use href="#chk"/></svg><i class="c4"></i><span>23950.00 - 44546.60</span><span>23950 - 44547</span></div>
<div class="tr"><svg class="ck"><use href="#chk"/></svg><i class="c5"></i><span>44546.60 - 782969.00</span><span>44547 - 782969</span></div>
</div>
<div class="row mode"><label>Mode</label><div class="combo md"><svg><use href="#quant"/></svg><em>Equal Count (Quantile)</em><i class="cd"></i></div><label class="push">Classes</label><div class="field spin cn"><em>5</em><i class="ud"></i></div></div>
<div class="row acts"><button class="btn clf">Classify</button><button class="btn pm"><svg viewBox="0 0 28 28"><path d="M9 1h10v8h8v10h-8v8H9v-8H1V9h8z" fill="#fff" stroke="#3f7d49" stroke-width="2"/><path d="M14 5v18M5 14h18" stroke="#3f7d49" stroke-width="4"/></svg></button><button class="btn pm"><svg viewBox="0 0 28 28"><path d="M1 8h26v12H1z" fill="#e0484a"/><path d="M3 10h22v8H3z" fill="none" stroke="#fff" stroke-width="2"/></svg></button><button class="btn del">Delete All</button><button class="btn advb">Advanced<i class="ar"></i></button></div>
<div class="row link"><svg class="ck"><use href="#chk"/></svg><label>Link class boundaries</label></div>
<div class="row rend"><svg viewBox="0 0 16 24"><path d="M2 3l10 9-10 9z" fill="none" stroke="#111" stroke-width="2"/></svg><strong>Layer Rendering</strong></div>
<div class="row foot"><button class="btn ur"><svg class="org"><use href="#undo"/></svg></button><button class="btn ur"><svg class="grn"><use href="#redo"/></svg></button><svg class="ck push"><use href="#chk"/></svg><label>Live update</label><button class="btn apply">Apply</button></div>
</div>
</div>
<div class="btabs"><span class="on">Layer Styling</span><span>Processing Toolbox</span></div>
</aside>
</main>

<footer class="status">
<div class="search"><svg viewBox="0 0 26 26"><circle cx="10" cy="10" r="8" fill="none" stroke="#9a9a9a" stroke-width="2"/><path d="M16 16l9 8" stroke="#9a9a9a" stroke-width="2.500"/></svg>Type to locate (⌘K)</div>
<label class="co">Coordinate</label><div class="field f1">3652418,4294305</div>
<svg class="mouse" viewBox="0 0 30 32"><path d="M4 6c3-6 9-5 11 0l3 6c6 2 10 7 9 13-2 6-10 6-14 1L5 14C3 11 3 8 4 6z" fill="#e9e0e0" stroke="#000" stroke-width="2.500"/><path d="M4 13l12-4M10 4l4 7M14 15l8 8M22 3l2 3M25 10l3 1" stroke="#000" stroke-width="2.200"/></svg>
<label class="sc">Scale</label><div class="field f2"><em>1:2680231</em><i class="drop"><i class="cd"></i></i></div>
<svg class="lock" viewBox="0 0 24 30"><path d="M6 14V8a6 6 0 0112 0v6" fill="none" stroke="#bbb" stroke-width="3"/><rect x="1" y="13" width="22" height="16" rx="2" fill="#8a8a8a"/></svg>
<label class="mg">Magnifier</label><div class="field spin f3"><em>100%</em><i class="ud"></i></div>
<label class="ro">Rotation</label><div class="field spin f4"><em>0.0 °</em><i class="ud"></i></div>
<svg class="ck"><use href="#chk"/></svg><label class="re">Render</label>
<svg class="glb" viewBox="0 0 28 28"><circle cx="14" cy="14" r="13" fill="#b5b5b5"/><path d="M14 1v26M1 14h26M3 8h22M3 20h22M14 1C5 8 5 20 14 27M14 1c9 7 9 19 0 26" fill="none" stroke="#444" stroke-width="1.500"/></svg><span class="epsg">EPSG:3089</span>
<svg class="bub" viewBox="0 0 34 30"><path d="M17 1c22 0 20 20 8 22l7 6c-10 0-13-4-16-5C-4 23-4 1 17 1z" fill="#8d8d8d"/><circle cx="9" cy="12" r="2" fill="#fff"/><circle cx="16" cy="12" r="2" fill="#fff"/><circle cx="23" cy="12" r="2" fill="#fff"/></svg>
<svg class="sizer" viewBox="0 0 20 24"><path d="M3 23L19 5M10 23l9-10M16 23l3-3" stroke="#8a8a8a" stroke-width="3" stroke-dasharray="3 2"/></svg>
</footer>

<div class="notes">
<svg viewBox="0 0 3448 2036"><path d="M84 893L2228 350" stroke="#d1351b" stroke-width="11"/><path d="M2279 337L2220 324 2233 376Z" fill="#d1351b"/><path d="M7 887h71v61H7zM2526 1672h165v71h-165z" fill="none" stroke="#d1351b" stroke-width="11"/></svg>
<p class="n1">1.</p><p class="n2">2.</p><p class="n3">3.</p><p class="n4">4.</p><p class="n5">5.</p>
<p class="a1">Access the Layer Styling<br>Panel by toggling this button</p>
<p class="a2">then change the<br>county color by<br>data in the layer.</p>
</div>
</body>
</html>
```
FILE: styles.css
```css
*{box-sizing:border-box;margin:0;padding:0}
html{background:#111}
body{width:3448px;height:2036px;overflow:hidden;position:relative;display:flex;flex-direction:column;background:#323232;color:#e2e2e2;font:25px/36px Inter,"Liberation Sans",sans-serif;letter-spacing:.25px;border-left:4px solid #1b1b1b;border-radius:18px 18px 16px 16px}
i,em{font-style:normal;display:block}
.defs{position:absolute}
svg{display:block;flex:none}
svg text{letter-spacing:0}
ul{list-style:none}
button{font:inherit;letter-spacing:inherit;border:0}

.titlebar{height:55px;flex:none;display:flex;align-items:center;padding-left:14px;gap:16px;background:#383838;border-bottom:2px solid #080808}
.light{width:24px;height:24px;border-radius:50%}
.light.r{background:#f35f55}.light.y{background:#f8b43f}.light.g{background:#4fbd4c}
.titlebar h1{flex:1;text-align:center;font-size:25.500px;letter-spacing:.6px;line-height:34px;padding-bottom:3px;font-weight:600;color:#b2b2b2;padding-right:136px}

.bar{height:78px;flex:none;display:flex;align-items:center;background:linear-gradient(#363636,#323232 30%,#323232);border-bottom:2px solid #7d7d7d;box-shadow:inset 0 -4px 0 #272727;padding-bottom:2px}
.bar.last{height:76px}
.t{width:66px;height:48px;padding:0 9px}
.off{opacity:.3}.dim{opacity:.5}
.t svg{width:48px;height:48px}
.t.press,.t.press2{display:flex;align-items:center;justify-content:center;width:60px;height:60px;margin:0 3px;padding:0;border:2px solid #555;border-radius:5px;background:#242424}
.t.press2{background:#333}
.corner{position:relative}
.corner::after{content:"";position:absolute;right:6px;bottom:-6px;border:6px solid transparent;border-top:8px solid #ccc;border-bottom:0}
.corner.press2::after{bottom:4px;right:0}
.grip{width:32px;height:34px;flex:none;background:repeating-linear-gradient(#888 0 4px,transparent 4px 7.500px) 17px 0/4px 100% no-repeat,repeating-linear-gradient(#888 0 4px,transparent 4px 7.500px) 23px 0/4px 100% no-repeat}
.grip.first{width:23px;background-position:8px 0,14px 0}
.grip.near{width:29px}
.grip.far{width:35px}
.dd{width:24px;flex:none}
.dd::after{content:"";display:block;margin-left:1px;width:0;border:8px solid transparent;border-top:10px solid #bdbdbd;border-bottom:0}
.sep{width:2px;height:40px;margin:0 6px;background:#262626;flex:none}
.yel{color:#fbe15c}.tan{color:#b09a88}.sage{color:#93a596}.org{color:#e5803c}.grn{color:#7fb98a}

.field{display:flex;align-items:center;background:#1e1e1e;border:2px solid #282828;border-radius:4px;overflow:hidden;flex:none}
.field em,.combo em{flex:1;white-space:nowrap}
.combo,.btn{display:flex;align-items:center;background:linear-gradient(#484848,#3c3c3c);border:2px solid #252525;border-radius:4px;box-shadow:inset 0 0 0 2px #555;color:#000;flex:none}
.combo em{letter-spacing:.5px}
.cd{border:8px solid transparent;border-top:10px solid #1a1a1a;border-bottom:0;width:0;margin-right:12px}
.ar{border:7px solid transparent;border-top:9px solid #bcbcbc;border-bottom:0;width:0}
.ud{width:28px;align-self:stretch;background:#3f3f3f;border:2px solid #555;border-radius:0 4px 4px 0;display:flex;flex-direction:column;align-items:center;justify-content:space-evenly}
.ud::before{content:"";border:8px solid transparent;border-bottom:9px solid #c0c0c0;border-top:0}
.ud::after{content:"";border:8px solid transparent;border-top:9px solid #c0c0c0;border-bottom:0}
.drop{align-self:stretch;display:flex;align-items:center;justify-content:center;background:#3f3f3f;border:2px solid #555}
.drop .cd{margin:0}
.tb12{width:193px;height:46px;margin-left:2px;color:#6a6a6a;padding-left:6px}
.tbpx{width:197px;height:46px;margin:0 3px 0 5px;color:#1c1c1c;padding-left:8px}

main{flex:none;height:1689px;display:grid;grid-template-columns:832px 1592px 1020px}
.left{position:relative;padding-right:16px;display:flex;flex-direction:column}
.left::after{content:"";position:absolute;right:4px;top:832px;width:4px;height:36px;background:repeating-linear-gradient(#888 0 4px,transparent 4px 7px)}
.ptitle{height:40px;flex:none;display:flex;align-items:center;gap:5px;padding:0 5px 0 6px;font-size:22.500px}
.ptitle span{flex:1}
.ptitle svg{width:22px;height:22px}
.ptools{height:62px;flex:none;display:flex;align-items:center;gap:22px;padding:0 0 4px 15px}
.ptools svg{width:28px;height:28px}
.ptools .big{width:32px;height:32px;margin:0 -2px}
.browser{height:447px;flex:none;display:flex;background:#1e1e1e;border-top:1px solid #2a2a2a;overflow:hidden}
.tree{flex:1;white-space:nowrap;letter-spacing:.4px}
.tree li{height:36px;line-height:34px;display:flex;align-items:center}
.tree svg{width:30px;height:30px;margin-right:14px}
.tree i{width:38px;height:18px;display:flex;align-items:center;flex:none}
.tree .r::after{content:"";border:8px solid transparent;border-left:9px solid #b5b5b5;border-right:0;margin-left:12px}
.tree .d::after{content:"";border:8px solid transparent;border-top:9px solid #b5b5b5;border-bottom:0;margin-left:8px}
.l0{padding-left:0}.l1{padding-left:32px}.l2{padding-left:64px}.l3{padding-left:96px;letter-spacing:.8px}.l4{padding-left:128px;letter-spacing:1.050px}
.l4.less{letter-spacing:.8px}
.tree .cur{background:#454545;width:674px;color:#fff}
.vscroll{width:27px;display:flex;flex-direction:column;background:#363636}
.vscroll i,.hscroll i{height:26px;width:27px;background:#3a3a3a;border:2px solid #505050;display:flex;align-items:center;justify-content:center;flex:none}
.vscroll b{height:157px;margin:2px 0 auto;background:#414141;border:2px solid #545454}
.up::after{content:"";border:8px solid transparent;border-bottom:10px solid #c0c0c0;border-top:0}
.dn::after{content:"";border:8px solid transparent;border-top:10px solid #c0c0c0;border-bottom:0}
.lt::after{content:"";border:8px solid transparent;border-right:10px solid #c0c0c0;border-left:0}
.rt::after{content:"";border:8px solid transparent;border-left:10px solid #c0c0c0;border-right:0}
.split{height:16px;flex:none;background:repeating-linear-gradient(90deg,#888 0 4px,transparent 4px 6px) center/36px 4px no-repeat}
.ptitle.lay{height:36px}
.ptools.lay{height:63px;padding-left:8px;padding-bottom:3px}
.pressed{width:44px;height:44px;margin-right:-8px;display:flex;align-items:center;justify-content:center;border:2px solid #555;border-radius:5px;background:#242424}
.menu{position:relative}
.menu::after{content:"";position:absolute;right:-6px;bottom:-3px;border:6px solid transparent;border-top:7px solid #bdbdbd;border-bottom:0}
.ptools .tight{margin-right:-16px}
.ptools .dd{margin-right:-6px}
.layers{flex:1;background:#1e1e1e;border-top:1px solid #2a2a2a;overflow:hidden;white-space:nowrap}
.ck{width:27px;height:27px}
.lr{height:36px;line-height:34px;display:flex;align-items:center;font-weight:700;letter-spacing:1.150px;padding-left:6px;overflow:hidden}
.lr.cur{background:#454545;color:#fff}
.lr u{text-underline-offset:4px;text-decoration-thickness:2px}
.lr .sq{width:31px;height:31px;background:#739e70;margin:0 13px 0 13px;flex:none}
.pw{width:33px;height:25px;margin:0 12px}
.lr .ras{width:26px;height:26px;margin:0 15px 0 17px}
.cls{height:72px;display:flex;align-items:center;padding-left:46px;letter-spacing:.9px}
.cls i{width:67px;height:66px;margin:0 13px}
i.c1{background:#f7fbff}i.c2{background:#c8dcf0}i.c3{background:#73b2d8}i.c4{background:#2979b9}i.c5{background:#08306b}
.lr.ky{height:35px;letter-spacing:.8px}
.band{padding-left:46px;height:35px;line-height:34px;letter-spacing:.7px}
.ramp{display:flex;padding-left:46px;height:383px;color:#000;letter-spacing:1.200px}
.ramp i{width:64px;margin-right:12px;background:linear-gradient(#fff,#000)}
.ramp div{display:flex;flex-direction:column;justify-content:space-between;margin-bottom:-3px}
.hscroll{height:28px;flex:none;display:flex;background:#363636}
.hscroll b{width:564px;margin:0 auto 0 28px;background:#414141;border:2px solid #545454}

.canvas{background:#fff;margin-top:3px}
.map{width:1592px;height:1686px}
.cty path{stroke:#20262b;stroke-width:2px;vector-effect:non-scaling-stroke;stroke-linejoin:round}
.cty .c1{fill:#f7fbff}.cty .c2{fill:#c8dcf0}.cty .c3{fill:#73b2d8}.cty .c4{fill:#2979b9}.cty .c5{fill:#08306b}
.cty .park{fill:#739e70}

.right{position:relative;padding:0 6px 0 20px;display:flex;flex-direction:column}
.right::before{content:"";position:absolute;left:8px;top:832px;width:4px;height:36px;background:repeating-linear-gradient(#888 0 4px,transparent 4px 7px)}
.right .ptitle{padding:0 0 0 2px;margin:0 -3px 6px 0}
.combo.big{height:45px}
.combo.big .pw{margin:0 5px 0 9px}
.combo.big em{letter-spacing:.75px}
.sty{margin-top:28px;display:flex;gap:8px}
.vtabs{width:76px;height:1510px;flex:none}
.vtabs .on{width:44px;height:44px;margin:-4px 0 10px 14px}
.vtabs span{height:64px;display:flex;align-items:center;justify-content:center;background:#454545;padding-right:14px}
.vtabs span:last-child{height:1140px;align-items:flex-start;padding-top:12px}
.vtabs span svg{width:46px;height:48px}
.vtabs span .sm{width:40px;height:40px}
.form{width:910px}
.form label{width:193px;flex:none;margin-left:-3px}
.row{display:flex;align-items:center}
.grd{height:44px}
.gi{width:28px;height:30px;margin:0 6px 0 12px}
.val{height:46px;margin-top:15px}
.fv{width:661px;height:46px;margin-right:15px;padding-left:4px}
.fv small{font-size:18px;font-weight:700;color:#666;margin-right:9px}
.fv .drop{width:40px}
.sym{height:40px;margin-top:15px}
.symfill{flex:1;background:#7b898c}
.rampfill{flex:1;background:linear-gradient(90deg,#f7fbff,#deebf7 13%,#c8dcf0 26%,#73b2d8 51%,#2979b9 76%,#0a539e 90%,#08306b)}
.leg{height:46px;margin-top:15px}
.fmt{width:389px;height:46px;padding-left:3px;margin-right:14px;letter-spacing:.6px}
.pr{width:200px;height:46px;margin-right:14px;padding-left:2px}
.pr em{flex:none;width:114px;letter-spacing:0}
.clr{width:26px;height:22px;margin:0 auto 0 6px}
.form .trim{width:auto;margin-left:11px}
.crp{height:51px;margin-top:17px}
.tabs{display:flex;align-items:flex-end;margin-top:17px;height:53px;border-bottom:2px solid #262626;gap:3px}
.tabs span{height:47px;width:169px;text-align:center;line-height:46px;border:2px solid #555;border-bottom:0;border-radius:4px 4px 0 0;background:#363636}
.tabs .on{width:142px;height:53px;line-height:50px;background:#3e3e3e;margin-bottom:-2px}
.table{height:824px;margin-top:21px;background:#1e1e1e;border:1px solid #2a2a2a}
.th{display:flex;height:31px;background:linear-gradient(#464646,#3a3a3a);color:#000;font-size:22px;line-height:34px}
.th span{padding-left:5px;width:300px;border-right:2px solid #5a5a5a;display:flex;justify-content:space-between}
.th span:first-child{width:130px;padding:0 6px 0 3px}
.th span:last-child{flex:1;border:0}
.th .ar{margin-top:10px}
.tr{display:flex;align-items:center;height:36px;line-height:34px;padding-left:5px;letter-spacing:.95px}
.tr i{width:30px;height:30px;margin:0 62px 0 14px}
.tr .ck{margin-top:4px}
.tr span{width:299px;white-space:nowrap}
.mode{height:44px;margin-top:16px}
.mode label{width:83px}
.md{width:374px;height:44px}
.md svg{width:32px;height:32px;margin:0 6px 0 8px}
.push,.mode .push{margin-left:auto}
.mode .push{width:109px}
.cn{width:143px;height:44px;padding-left:7px}
.acts{height:45px;margin-top:17px}
.btn{justify-content:center;height:45px}
.sw{width:696px;height:100%;padding:9px 7px;margin-right:4px;align-items:stretch}
.mini{width:20px;height:100%}
.ep{width:44px;height:46px;font:italic 36px "Liberation Serif",serif;color:#6a3a80}
.clf{width:158px;margin-right:13px}
.pm{width:54px;margin-right:14px}
.pm svg{width:28px;height:28px}
.del{width:157px}
.advb{width:157px;margin-left:auto;gap:9px}
.link{height:27px;margin:23px 0 0 -1px;letter-spacing:.5px}
.link label{margin-left:10px;width:auto}
.rend{height:34px;margin-top:40px;padding-left:8px;letter-spacing:.7px}
.rend svg{width:16px;height:24px;margin-right:19px}
.foot{height:45px;margin-top:13px}
.ur{width:45px;margin-right:14px}
.ur svg{width:30px;height:30px}
.foot label{width:auto;margin:0 26px 0 11px}
.apply{width:157px}
.btabs{display:flex;align-items:flex-start;margin:7px -6px 0 -4px;border-top:2px solid #262626;gap:2px;height:52px}
.btabs span{height:46px;width:284px;text-align:center;line-height:46px;border:2px solid #4c4c4c;border-top:0;border-radius:0 0 4px 4px;background:#2c2c2c}
.btabs .on{width:204px;height:52px;line-height:54px;background:#323232;margin-top:-2px}

.status{height:60px;flex:none;display:flex;align-items:center;padding:6px 0 0 6px;font-size:23px;letter-spacing:.1px}
.search{width:428px;height:48px;background:#1c1c1c;border:2px solid #272727;border-radius:5px;color:#9a9a9a;display:flex;align-items:center;font-size:25px;letter-spacing:.4px}
.search svg{width:26px;height:26px;margin:0 15px 0 15px}
.status label{white-space:nowrap}
.status .field{height:44px;padding-left:6px}
.co{margin-left:1219px;width:122px;color:#cfcfcf}
.status .f1{width:233px;padding-left:10px;color:#ccc}
.mouse{width:30px;height:32px;margin:0 27px 0 11px}
.sc{width:68px;font-weight:500;color:#eee}
.f2{width:181px}
.f2 .drop{width:37px}
.lock{width:24px;height:30px;margin:0 18px 0 25px}
.mg{width:106px;font-weight:500;color:#f4f4f4}
.f3{width:184px;margin-right:17px}
.ro{width:108px}
.f4{width:184px;margin-right:13px}
.re{margin-left:9px;width:110px}
.glb{width:28px;height:28px;margin-right:6px}
.epsg{color:#000;width:167px}
.bub{width:34px;height:30px}
.sizer{width:20px;height:24px;margin-left:auto;align-self:flex-end}

.notes{position:absolute;left:-4px;top:0;width:3448px;height:2036px;color:#d1351b;font:900 50px/67px Lato,sans-serif;letter-spacing:1.700px;-webkit-text-stroke:.8px #d1351b}
.notes svg{position:absolute;inset:0;width:3448px;height:2036px}
.notes p{position:absolute;white-space:nowrap}
.n1{left:998px;top:576px}.n2{left:2366px;top:318px}.n3{left:2366px;top:381px}.n4{left:2366px;top:447px}.n5{left:2366px;top:1677px}
.a1{left:917px;top:699px}
.a2{right:1045px;top:563px;text-align:right}
```
